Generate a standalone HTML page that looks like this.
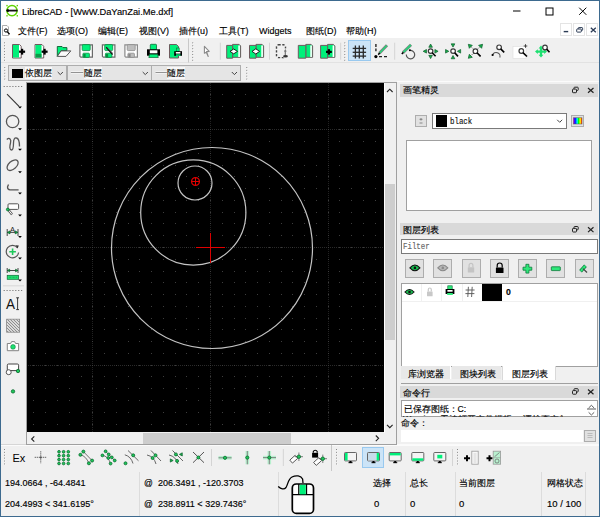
<!DOCTYPE html><html><head><meta charset="utf-8"><style>
*{margin:0;padding:0;box-sizing:border-box}
html,body{width:600px;height:517px;overflow:hidden;background:#f0f0f0}
body{position:relative;font-family:"Liberation Sans",sans-serif;font-size:8.7px;color:#000}
.t{position:absolute;white-space:nowrap;line-height:12px;-webkit-text-stroke:0.15px currentColor}
svg{position:absolute;left:0;top:0}
</style></head><body><div style="position:absolute;left:0px;top:0px;width:600px;height:38px;background:#fff"></div><div style="position:absolute;left:1px;top:38px;width:598px;height:24px;background:#f0f0f0"></div><div style="position:absolute;left:1px;top:62px;width:598px;height:1px;background:#e2e2e2"></div><div style="position:absolute;left:243px;top:64px;width:356px;height:1px;background:#fff"></div><div style="position:absolute;left:243px;top:64px;width:1px;height:17px;background:#fff"></div><div style="position:absolute;left:1px;top:81px;width:396px;height:1px;background:#fafafa"></div><div style="position:absolute;left:1px;top:63px;width:598px;height:19px;background:#f0f0f0"></div><div style="position:absolute;left:26px;top:82px;width:358px;height:351px;background:#000;border-left:1px solid #a0a0a0;border-top:1px solid #a0a0a0"></div><div style="position:absolute;left:384px;top:82px;width:12px;height:1px;background:#a0a0a0"></div><div style="position:absolute;left:384px;top:83px;width:12px;height:350px;background:#f0f0f0;border-left:1px solid #fff"></div><div style="position:absolute;left:385px;top:184px;width:10px;height:156px;background:#cdcdcd"></div><div style="position:absolute;left:396px;top:82px;width:1px;height:364px;background:#a0a0a0"></div><div style="position:absolute;left:26px;top:432px;width:358px;height:13px;background:#f0f0f0;border-left:1px solid #a0a0a0"></div><div style="position:absolute;left:143px;top:433px;width:148px;height:11px;background:#cdcdcd"></div><div style="position:absolute;left:26px;top:444px;width:371px;height:1px;background:#a0a0a0"></div><div style="position:absolute;left:1px;top:444px;width:25px;height:1px;background:#d6d6d6"></div><div style="position:absolute;left:1px;top:445px;width:598px;height:1px;background:#fbfbfb"></div><div style="position:absolute;left:397px;top:444px;width:202px;height:1px;background:#fafafa"></div><div style="position:absolute;left:0px;top:0px;width:600px;height:1px;background:#3d6a8f"></div><div style="position:absolute;left:0px;top:0px;width:1px;height:517px;background:#3d6a8f"></div><div style="position:absolute;left:599px;top:0px;width:1px;height:517px;background:#3d6a8f"></div><div style="position:absolute;left:0px;top:516px;width:600px;height:1px;background:#3d6a8f"></div><div style="position:absolute;left:397px;top:81px;width:202px;height:1px;background:#fbfbfb"></div><div style="position:absolute;left:400px;top:84px;width:198px;height:12.5px;background:#d9d9d9"></div><div style="position:absolute;left:415px;top:115px;width:12px;height:12px;background:#e1e1e1;border:1px solid #adadad"></div><div style="position:absolute;left:432px;top:113px;width:135px;height:16px;background:#fff;border:1px solid #7a7a7a"></div><div style="position:absolute;left:436px;top:115px;width:11px;height:12px;background:#000"></div><div style="position:absolute;left:571px;top:115px;width:13px;height:12px;background:#e1e1e1;border:1px solid #adadad"></div><div style="position:absolute;left:406px;top:140px;width:186px;height:71px;background:#fff;border:1px solid #a0a0a0"></div><div style="position:absolute;left:400px;top:223px;width:198px;height:12px;background:#d9d9d9"></div><div style="position:absolute;left:401px;top:239px;width:197px;height:15px;background:#fff;border:1px solid #7a7a7a"></div><div style="position:absolute;left:405px;top:259px;width:19px;height:19px;background:#e1e1e1;border:1px solid #adadad"></div><div style="position:absolute;left:433px;top:259px;width:19px;height:19px;background:#e1e1e1;border:1px solid #adadad"></div><div style="position:absolute;left:462px;top:259px;width:19px;height:19px;background:#e1e1e1;border:1px solid #adadad"></div><div style="position:absolute;left:490px;top:259px;width:19px;height:19px;background:#e1e1e1;border:1px solid #adadad"></div><div style="position:absolute;left:518px;top:259px;width:19px;height:19px;background:#e1e1e1;border:1px solid #adadad"></div><div style="position:absolute;left:546px;top:259px;width:19px;height:19px;background:#e1e1e1;border:1px solid #adadad"></div><div style="position:absolute;left:575px;top:259px;width:19px;height:19px;background:#e1e1e1;border:1px solid #adadad"></div><div style="position:absolute;left:401px;top:283px;width:197px;height:84px;background:#fff;border:1px solid #a0a0a0"></div><div style="position:absolute;left:402px;top:301px;width:195px;height:1px;background:#f0f0f0"></div><div style="position:absolute;left:421px;top:284px;width:1px;height:17px;background:#f0f0f0"></div><div style="position:absolute;left:441px;top:284px;width:1px;height:17px;background:#f0f0f0"></div><div style="position:absolute;left:462px;top:284px;width:1px;height:17px;background:#f0f0f0"></div><div style="position:absolute;left:482px;top:284px;width:20px;height:17px;background:#000"></div><div style="position:absolute;left:401px;top:366px;width:50px;height:13px;background:#e8e8e8;border-right:1px solid #fff"></div><div style="position:absolute;left:452px;top:366px;width:49px;height:13px;background:#e8e8e8"></div><div style="position:absolute;left:502px;top:366px;width:54px;height:14px;background:#fff;border-left:1px solid #d9d9d9;border-right:1px solid #d9d9d9"></div><div style="position:absolute;left:401px;top:383px;width:197px;height:1px;background:#a0a0a0"></div><div style="position:absolute;left:400px;top:386px;width:198px;height:12px;background:#d9d9d9"></div><div style="position:absolute;left:401px;top:400px;width:197px;height:17px;background:#fff;border:1px solid #a0a0a0"></div><div style="position:absolute;left:401px;top:430px;width:182px;height:12px;background:#fff"></div><div style="position:absolute;left:584px;top:430px;width:12px;height:12px;background:#e1e1e1;border:1px solid #adadad"></div><div style="position:absolute;left:8px;top:65px;width:59px;height:16px;background:#e5e5e5;border:1px solid #adadad"></div><div style="position:absolute;left:12px;top:69px;width:11px;height:9px;background:#000"></div><div style="position:absolute;left:67px;top:65px;width:85px;height:16px;background:#e5e5e5;border:1px solid #adadad"></div><div style="position:absolute;left:151px;top:65px;width:90px;height:16px;background:#e5e5e5;border:1px solid #adadad"></div><div style="position:absolute;left:348px;top:40px;width:23px;height:21px;background:#cce4f7;border:1px solid #99c9ef"></div><div style="position:absolute;left:362px;top:447px;width:22px;height:21px;background:#cce4f7;border:1px solid #99c9ef"></div><div style="position:absolute;left:139px;top:472px;width:1px;height:44px;background:#dcdcdc"></div><div style="position:absolute;left:278px;top:472px;width:1px;height:44px;background:#dcdcdc"></div><div style="position:absolute;left:405px;top:472px;width:1px;height:44px;background:#dcdcdc"></div><div style="position:absolute;left:455px;top:472px;width:1px;height:44px;background:#dcdcdc"></div><div style="position:absolute;left:541px;top:472px;width:1px;height:44px;background:#dcdcdc"></div><div style="position:absolute;left:585px;top:472px;width:1px;height:44px;background:#dcdcdc"></div><div class="t" style="left:22px;top:5.5px;font-size:9.3px;color:#000">LibreCAD - [WwW.DaYanZai.Me.dxf]</div><div class="t" style="left:18px;top:25px;font-size:9px">文件(F)</div><div class="t" style="left:57px;top:25px;font-size:9px">选项(O)</div><div class="t" style="left:98px;top:25px;font-size:9px">编辑(E)</div><div class="t" style="left:139px;top:25px;font-size:9px">视图(V)</div><div class="t" style="left:179px;top:25px;font-size:9px">插件(u)</div><div class="t" style="left:219px;top:25px;font-size:9px">工具(T)</div><div class="t" style="left:259px;top:25px;font-size:9px">Widgets</div><div class="t" style="left:306px;top:25px;font-size:9px">图纸(D)</div><div class="t" style="left:346px;top:25px;font-size:9px">帮助(H)</div><div class="t" style="left:25px;top:67px;font-size:8.5px;background:#f8f8f8">依图层</div><div class="t" style="left:84px;top:67px;font-size:8.5px;background:#f8f8f8">随层</div><div class="t" style="left:167px;top:67px;font-size:8.5px;background:#f8f8f8">随层</div><div class="t" style="left:403px;top:84px;">画笔精灵</div><div class="t" style="left:450px;top:116px;font-family:'Liberation Mono',monospace;font-size:9.5px;transform:scaleX(0.78);transform-origin:0 0;color:#111">black</div><div class="t" style="left:403px;top:224px;">图层列表</div><div class="t" style="left:403px;top:241px;font-family:'Liberation Mono',monospace;font-size:9.5px;transform:scaleX(0.78);transform-origin:0 0;color:#666">Filter</div><div class="t" style="left:506px;top:286px;font-weight:bold">0</div><div class="t" style="left:408px;top:368px;">库浏览器</div><div class="t" style="left:460px;top:368px;">图块列表</div><div class="t" style="left:512px;top:368px;">图层列表</div><div class="t" style="left:403px;top:387px;">命令行</div><div class="t" style="left:404px;top:403px;">已保存图纸<span style='letter-spacing:-3px'>：</span> C:</div><div style="position:absolute;left:403px;top:415px;width:160px;height:2px;overflow:hidden"><div class="t" style="left:0;top:-2.5px;color:#222">Warning: 无法打开文件模板。 请检查文件路径设置</div></div><div class="t" style="left:401px;top:417px;">命令<span style='letter-spacing:-3px'>：</span></div><div class="t" style="left:12.5px;top:451.5px;font-size:11px;-webkit-text-stroke:0">Ex</div><div class="t" style="left:5px;top:477px;font-size:9px">194.0664 , -64.4841</div><div class="t" style="left:5px;top:498px;font-size:9px">204.4993 &lt; 341.6195°</div><div class="t" style="left:144px;top:477px;">@</div><div class="t" style="left:158px;top:477px;font-size:9px">206.3491 , -120.3703</div><div class="t" style="left:144px;top:498px;">@</div><div class="t" style="left:158px;top:498px;font-size:9px">238.8911 &lt; 329.7436°</div><div class="t" style="left:373px;top:477px;">选择</div><div class="t" style="left:374px;top:498px;font-size:9.5px">0</div><div class="t" style="left:410px;top:477px;">总长</div><div class="t" style="left:410px;top:498px;font-size:9.5px">0</div><div class="t" style="left:459px;top:477px;">当前图层</div><div class="t" style="left:459px;top:498px;font-size:9.5px">0</div><div class="t" style="left:547px;top:477px;">网格状态</div><div class="t" style="left:547px;top:498px;font-size:9.5px">10 / 100</div><svg width="600" height="517" viewBox="0 0 600 517"><defs><clipPath id="cv"><rect x="27" y="83" width="357" height="349"/></clipPath></defs><g clip-path="url(#cv)"><rect x="92" y="83" width="1" height="1" fill="#222"/><rect x="92" y="85" width="1" height="1" fill="#222"/><rect x="92" y="87" width="1" height="1" fill="#222"/><rect x="92" y="89" width="1" height="1" fill="#222"/><rect x="92" y="91" width="1" height="1" fill="#222"/><rect x="92" y="93" width="1" height="1" fill="#222"/><rect x="92" y="95" width="1" height="1" fill="#222"/><rect x="92" y="97" width="1" height="1" fill="#222"/><rect x="92" y="99" width="1" height="1" fill="#222"/><rect x="92" y="101" width="1" height="1" fill="#222"/><rect x="92" y="103" width="1" height="1" fill="#222"/><rect x="92" y="105" width="1" height="1" fill="#222"/><rect x="92" y="107" width="1" height="1" fill="#222"/><rect x="92" y="109" width="1" height="1" fill="#222"/><rect x="92" y="111" width="1" height="1" fill="#222"/><rect x="92" y="113" width="1" height="1" fill="#222"/><rect x="92" y="115" width="1" height="1" fill="#222"/><rect x="92" y="117" width="1" height="1" fill="#222"/><rect x="92" y="119" width="1" height="1" fill="#222"/><rect x="92" y="121" width="1" height="1" fill="#222"/><rect x="92" y="123" width="1" height="1" fill="#222"/><rect x="92" y="125" width="1" height="1" fill="#222"/><rect x="92" y="127" width="1" height="1" fill="#222"/><rect x="92" y="129" width="1" height="1" fill="#222"/><rect x="92" y="131" width="1" height="1" fill="#222"/><rect x="92" y="133" width="1" height="1" fill="#222"/><rect x="92" y="135" width="1" height="1" fill="#222"/><rect x="92" y="137" width="1" height="1" fill="#222"/><rect x="92" y="139" width="1" height="1" fill="#222"/><rect x="92" y="141" width="1" height="1" fill="#222"/><rect x="92" y="143" width="1" height="1" fill="#222"/><rect x="92" y="145" width="1" height="1" fill="#222"/><rect x="92" y="147" width="1" height="1" fill="#222"/><rect x="92" y="149" width="1" height="1" fill="#222"/><rect x="92" y="151" width="1" height="1" fill="#222"/><rect x="92" y="153" width="1" height="1" fill="#222"/><rect x="92" y="155" width="1" height="1" fill="#222"/><rect x="92" y="157" width="1" height="1" fill="#222"/><rect x="92" y="159" width="1" height="1" fill="#222"/><rect x="92" y="161" width="1" height="1" fill="#222"/><rect x="92" y="163" width="1" height="1" fill="#222"/><rect x="92" y="165" width="1" height="1" fill="#222"/><rect x="92" y="167" width="1" height="1" fill="#222"/><rect x="92" y="169" width="1" height="1" fill="#222"/><rect x="92" y="171" width="1" height="1" fill="#222"/><rect x="92" y="173" width="1" height="1" fill="#222"/><rect x="92" y="175" width="1" height="1" fill="#222"/><rect x="92" y="177" width="1" height="1" fill="#222"/><rect x="92" y="179" width="1" height="1" fill="#222"/><rect x="92" y="181" width="1" height="1" fill="#222"/><rect x="92" y="183" width="1" height="1" fill="#222"/><rect x="92" y="185" width="1" height="1" fill="#222"/><rect x="92" y="187" width="1" height="1" fill="#222"/><rect x="92" y="189" width="1" height="1" fill="#222"/><rect x="92" y="191" width="1" height="1" fill="#222"/><rect x="92" y="193" width="1" height="1" fill="#222"/><rect x="92" y="195" width="1" height="1" fill="#222"/><rect x="92" y="197" width="1" height="1" fill="#222"/><rect x="92" y="199" width="1" height="1" fill="#222"/><rect x="92" y="201" width="1" height="1" fill="#222"/><rect x="92" y="203" width="1" height="1" fill="#222"/><rect x="92" y="205" width="1" height="1" fill="#222"/><rect x="92" y="207" width="1" height="1" fill="#222"/><rect x="92" y="209" width="1" height="1" fill="#222"/><rect x="92" y="211" width="1" height="1" fill="#222"/><rect x="92" y="213" width="1" height="1" fill="#222"/><rect x="92" y="215" width="1" height="1" fill="#222"/><rect x="92" y="217" width="1" height="1" fill="#222"/><rect x="92" y="219" width="1" height="1" fill="#222"/><rect x="92" y="221" width="1" height="1" fill="#222"/><rect x="92" y="223" width="1" height="1" fill="#222"/><rect x="92" y="225" width="1" height="1" fill="#222"/><rect x="92" y="227" width="1" height="1" fill="#222"/><rect x="92" y="229" width="1" height="1" fill="#222"/><rect x="92" y="231" width="1" height="1" fill="#222"/><rect x="92" y="233" width="1" height="1" fill="#222"/><rect x="92" y="235" width="1" height="1" fill="#222"/><rect x="92" y="237" width="1" height="1" fill="#222"/><rect x="92" y="239" width="1" height="1" fill="#222"/><rect x="92" y="241" width="1" height="1" fill="#222"/><rect x="92" y="243" width="1" height="1" fill="#222"/><rect x="92" y="245" width="1" height="1" fill="#222"/><rect x="92" y="247" width="1" height="1" fill="#222"/><rect x="92" y="249" width="1" height="1" fill="#222"/><rect x="92" y="251" width="1" height="1" fill="#222"/><rect x="92" y="253" width="1" height="1" fill="#222"/><rect x="92" y="255" width="1" height="1" fill="#222"/><rect x="92" y="257" width="1" height="1" fill="#222"/><rect x="92" y="259" width="1" height="1" fill="#222"/><rect x="92" y="261" width="1" height="1" fill="#222"/><rect x="92" y="263" width="1" height="1" fill="#222"/><rect x="92" y="265" width="1" height="1" fill="#222"/><rect x="92" y="267" width="1" height="1" fill="#222"/><rect x="92" y="269" width="1" height="1" fill="#222"/><rect x="92" y="271" width="1" height="1" fill="#222"/><rect x="92" y="273" width="1" height="1" fill="#222"/><rect x="92" y="275" width="1" height="1" fill="#222"/><rect x="92" y="277" width="1" height="1" fill="#222"/><rect x="92" y="279" width="1" height="1" fill="#222"/><rect x="92" y="281" width="1" height="1" fill="#222"/><rect x="92" y="283" width="1" height="1" fill="#222"/><rect x="92" y="285" width="1" height="1" fill="#222"/><rect x="92" y="287" width="1" height="1" fill="#222"/><rect x="92" y="289" width="1" height="1" fill="#222"/><rect x="92" y="291" width="1" height="1" fill="#222"/><rect x="92" y="293" width="1" height="1" fill="#222"/><rect x="92" y="295" width="1" height="1" fill="#222"/><rect x="92" y="297" width="1" height="1" fill="#222"/><rect x="92" y="299" width="1" height="1" fill="#222"/><rect x="92" y="301" width="1" height="1" fill="#222"/><rect x="92" y="303" width="1" height="1" fill="#222"/><rect x="92" y="305" width="1" height="1" fill="#222"/><rect x="92" y="307" width="1" height="1" fill="#222"/><rect x="92" y="309" width="1" height="1" fill="#222"/><rect x="92" y="311" width="1" height="1" fill="#222"/><rect x="92" y="313" width="1" height="1" fill="#222"/><rect x="92" y="315" width="1" height="1" fill="#222"/><rect x="92" y="317" width="1" height="1" fill="#222"/><rect x="92" y="319" width="1" height="1" fill="#222"/><rect x="92" y="321" width="1" height="1" fill="#222"/><rect x="92" y="323" width="1" height="1" fill="#222"/><rect x="92" y="325" width="1" height="1" fill="#222"/><rect x="92" y="327" width="1" height="1" fill="#222"/><rect x="92" y="329" width="1" height="1" fill="#222"/><rect x="92" y="331" width="1" height="1" fill="#222"/><rect x="92" y="333" width="1" height="1" fill="#222"/><rect x="92" y="335" width="1" height="1" fill="#222"/><rect x="92" y="337" width="1" height="1" fill="#222"/><rect x="92" y="339" width="1" height="1" fill="#222"/><rect x="92" y="341" width="1" height="1" fill="#222"/><rect x="92" y="343" width="1" height="1" fill="#222"/><rect x="92" y="345" width="1" height="1" fill="#222"/><rect x="92" y="347" width="1" height="1" fill="#222"/><rect x="92" y="349" width="1" height="1" fill="#222"/><rect x="92" y="351" width="1" height="1" fill="#222"/><rect x="92" y="353" width="1" height="1" fill="#222"/><rect x="92" y="355" width="1" height="1" fill="#222"/><rect x="92" y="357" width="1" height="1" fill="#222"/><rect x="92" y="359" width="1" height="1" fill="#222"/><rect x="92" y="361" width="1" height="1" fill="#222"/><rect x="92" y="363" width="1" height="1" fill="#222"/><rect x="92" y="365" width="1" height="1" fill="#222"/><rect x="92" y="367" width="1" height="1" fill="#222"/><rect x="92" y="369" width="1" height="1" fill="#222"/><rect x="92" y="371" width="1" height="1" fill="#222"/><rect x="92" y="373" width="1" height="1" fill="#222"/><rect x="92" y="375" width="1" height="1" fill="#222"/><rect x="92" y="377" width="1" height="1" fill="#222"/><rect x="92" y="379" width="1" height="1" fill="#222"/><rect x="92" y="381" width="1" height="1" fill="#222"/><rect x="92" y="383" width="1" height="1" fill="#222"/><rect x="92" y="385" width="1" height="1" fill="#222"/><rect x="92" y="387" width="1" height="1" fill="#222"/><rect x="92" y="389" width="1" height="1" fill="#222"/><rect x="92" y="391" width="1" height="1" fill="#222"/><rect x="92" y="393" width="1" height="1" fill="#222"/><rect x="92" y="395" width="1" height="1" fill="#222"/><rect x="92" y="397" width="1" height="1" fill="#222"/><rect x="92" y="399" width="1" height="1" fill="#222"/><rect x="92" y="401" width="1" height="1" fill="#222"/><rect x="92" y="403" width="1" height="1" fill="#222"/><rect x="92" y="405" width="1" height="1" fill="#222"/><rect x="92" y="407" width="1" height="1" fill="#222"/><rect x="92" y="409" width="1" height="1" fill="#222"/><rect x="92" y="411" width="1" height="1" fill="#222"/><rect x="92" y="413" width="1" height="1" fill="#222"/><rect x="92" y="415" width="1" height="1" fill="#222"/><rect x="92" y="417" width="1" height="1" fill="#222"/><rect x="92" y="419" width="1" height="1" fill="#222"/><rect x="92" y="421" width="1" height="1" fill="#222"/><rect x="92" y="423" width="1" height="1" fill="#222"/><rect x="92" y="425" width="1" height="1" fill="#222"/><rect x="92" y="427" width="1" height="1" fill="#222"/><rect x="92" y="429" width="1" height="1" fill="#222"/><rect x="92" y="431" width="1" height="1" fill="#222"/><rect x="28" y="129" width="1" height="1" fill="#2a2a2a"/><rect x="30" y="129" width="1" height="1" fill="#2a2a2a"/><rect x="32" y="129" width="1" height="1" fill="#2a2a2a"/><rect x="34" y="129" width="1" height="1" fill="#2a2a2a"/><rect x="36" y="129" width="1" height="1" fill="#2a2a2a"/><rect x="38" y="129" width="1" height="1" fill="#2a2a2a"/><rect x="40" y="129" width="1" height="1" fill="#2a2a2a"/><rect x="42" y="129" width="1" height="1" fill="#2a2a2a"/><rect x="44" y="129" width="1" height="1" fill="#2a2a2a"/><rect x="46" y="129" width="1" height="1" fill="#2a2a2a"/><rect x="48" y="129" width="1" height="1" fill="#2a2a2a"/><rect x="50" y="129" width="1" height="1" fill="#2a2a2a"/><rect x="52" y="129" width="1" height="1" fill="#2a2a2a"/><rect x="54" y="129" width="1" height="1" fill="#2a2a2a"/><rect x="56" y="129" width="1" height="1" fill="#2a2a2a"/><rect x="58" y="129" width="1" height="1" fill="#2a2a2a"/><rect x="60" y="129" width="1" height="1" fill="#2a2a2a"/><rect x="62" y="129" width="1" height="1" fill="#2a2a2a"/><rect x="64" y="129" width="1" height="1" fill="#2a2a2a"/><rect x="66" y="129" width="1" height="1" fill="#2a2a2a"/><rect x="68" y="129" width="1" height="1" fill="#2a2a2a"/><rect x="70" y="129" width="1" height="1" fill="#2a2a2a"/><rect x="72" y="129" width="1" height="1" fill="#2a2a2a"/><rect x="74" y="129" width="1" height="1" fill="#2a2a2a"/><rect x="76" y="129" width="1" height="1" fill="#2a2a2a"/><rect x="78" y="129" width="1" height="1" fill="#2a2a2a"/><rect x="80" y="129" width="1" height="1" fill="#2a2a2a"/><rect x="82" y="129" width="1" height="1" fill="#2a2a2a"/><rect x="84" y="129" width="1" height="1" fill="#2a2a2a"/><rect x="86" y="129" width="1" height="1" fill="#2a2a2a"/><rect x="88" y="129" width="1" height="1" fill="#2a2a2a"/><rect x="90" y="129" width="1" height="1" fill="#2a2a2a"/><rect x="92" y="129" width="1" height="1" fill="#2a2a2a"/><rect x="94" y="129" width="1" height="1" fill="#2a2a2a"/><rect x="96" y="129" width="1" height="1" fill="#2a2a2a"/><rect x="98" y="129" width="1" height="1" fill="#2a2a2a"/><rect x="100" y="129" width="1" height="1" fill="#2a2a2a"/><rect x="102" y="129" width="1" height="1" fill="#2a2a2a"/><rect x="104" y="129" width="1" height="1" fill="#2a2a2a"/><rect x="106" y="129" width="1" height="1" fill="#2a2a2a"/><rect x="108" y="129" width="1" height="1" fill="#2a2a2a"/><rect x="110" y="129" width="1" height="1" fill="#2a2a2a"/><rect x="112" y="129" width="1" height="1" fill="#2a2a2a"/><rect x="114" y="129" width="1" height="1" fill="#2a2a2a"/><rect x="116" y="129" width="1" height="1" fill="#2a2a2a"/><rect x="118" y="129" width="1" height="1" fill="#2a2a2a"/><rect x="120" y="129" width="1" height="1" fill="#2a2a2a"/><rect x="122" y="129" width="1" height="1" fill="#2a2a2a"/><rect x="124" y="129" width="1" height="1" fill="#2a2a2a"/><rect x="126" y="129" width="1" height="1" fill="#2a2a2a"/><rect x="128" y="129" width="1" height="1" fill="#2a2a2a"/><rect x="130" y="129" width="1" height="1" fill="#2a2a2a"/><rect x="132" y="129" width="1" height="1" fill="#2a2a2a"/><rect x="134" y="129" width="1" height="1" fill="#2a2a2a"/><rect x="136" y="129" width="1" height="1" fill="#2a2a2a"/><rect x="138" y="129" width="1" height="1" fill="#2a2a2a"/><rect x="140" y="129" width="1" height="1" fill="#2a2a2a"/><rect x="142" y="129" width="1" height="1" fill="#2a2a2a"/><rect x="144" y="129" width="1" height="1" fill="#2a2a2a"/><rect x="146" y="129" width="1" height="1" fill="#2a2a2a"/><rect x="148" y="129" width="1" height="1" fill="#2a2a2a"/><rect x="150" y="129" width="1" height="1" fill="#2a2a2a"/><rect x="152" y="129" width="1" height="1" fill="#2a2a2a"/><rect x="154" y="129" width="1" height="1" fill="#2a2a2a"/><rect x="156" y="129" width="1" height="1" fill="#2a2a2a"/><rect x="158" y="129" width="1" height="1" fill="#2a2a2a"/><rect x="160" y="129" width="1" height="1" fill="#2a2a2a"/><rect x="162" y="129" width="1" height="1" fill="#2a2a2a"/><rect x="164" y="129" width="1" height="1" fill="#2a2a2a"/><rect x="166" y="129" width="1" height="1" fill="#2a2a2a"/><rect x="168" y="129" width="1" height="1" fill="#2a2a2a"/><rect x="170" y="129" width="1" height="1" fill="#2a2a2a"/><rect x="172" y="129" width="1" height="1" fill="#2a2a2a"/><rect x="174" y="129" width="1" height="1" fill="#2a2a2a"/><rect x="176" y="129" width="1" height="1" fill="#2a2a2a"/><rect x="178" y="129" width="1" height="1" fill="#2a2a2a"/><rect x="180" y="129" width="1" height="1" fill="#2a2a2a"/><rect x="182" y="129" width="1" height="1" fill="#2a2a2a"/><rect x="184" y="129" width="1" height="1" fill="#2a2a2a"/><rect x="186" y="129" width="1" height="1" fill="#2a2a2a"/><rect x="188" y="129" width="1" height="1" fill="#2a2a2a"/><rect x="190" y="129" width="1" height="1" fill="#2a2a2a"/><rect x="192" y="129" width="1" height="1" fill="#2a2a2a"/><rect x="194" y="129" width="1" height="1" fill="#2a2a2a"/><rect x="196" y="129" width="1" height="1" fill="#2a2a2a"/><rect x="198" y="129" width="1" height="1" fill="#2a2a2a"/><rect x="200" y="129" width="1" height="1" fill="#2a2a2a"/><rect x="202" y="129" width="1" height="1" fill="#2a2a2a"/><rect x="204" y="129" width="1" height="1" fill="#2a2a2a"/><rect x="206" y="129" width="1" height="1" fill="#2a2a2a"/><rect x="208" y="129" width="1" height="1" fill="#2a2a2a"/><rect x="210" y="129" width="1" height="1" fill="#2a2a2a"/><rect x="212" y="129" width="1" height="1" fill="#2a2a2a"/><rect x="214" y="129" width="1" height="1" fill="#2a2a2a"/><rect x="216" y="129" width="1" height="1" fill="#2a2a2a"/><rect x="218" y="129" width="1" height="1" fill="#2a2a2a"/><rect x="220" y="129" width="1" height="1" fill="#2a2a2a"/><rect x="222" y="129" width="1" height="1" fill="#2a2a2a"/><rect x="224" y="129" width="1" height="1" fill="#2a2a2a"/><rect x="226" y="129" width="1" height="1" fill="#2a2a2a"/><rect x="228" y="129" width="1" height="1" fill="#2a2a2a"/><rect x="230" y="129" width="1" height="1" fill="#2a2a2a"/><rect x="232" y="129" width="1" height="1" fill="#2a2a2a"/><rect x="234" y="129" width="1" height="1" fill="#2a2a2a"/><rect x="236" y="129" width="1" height="1" fill="#2a2a2a"/><rect x="238" y="129" width="1" height="1" fill="#2a2a2a"/><rect x="240" y="129" width="1" height="1" fill="#2a2a2a"/><rect x="242" y="129" width="1" height="1" fill="#2a2a2a"/><rect x="244" y="129" width="1" height="1" fill="#2a2a2a"/><rect x="246" y="129" width="1" height="1" fill="#2a2a2a"/><rect x="248" y="129" width="1" height="1" fill="#2a2a2a"/><rect x="250" y="129" width="1" height="1" fill="#2a2a2a"/><rect x="252" y="129" width="1" height="1" fill="#2a2a2a"/><rect x="254" y="129" width="1" height="1" fill="#2a2a2a"/><rect x="256" y="129" width="1" height="1" fill="#2a2a2a"/><rect x="258" y="129" width="1" height="1" fill="#2a2a2a"/><rect x="260" y="129" width="1" height="1" fill="#2a2a2a"/><rect x="262" y="129" width="1" height="1" fill="#2a2a2a"/><rect x="264" y="129" width="1" height="1" fill="#2a2a2a"/><rect x="266" y="129" width="1" height="1" fill="#2a2a2a"/><rect x="268" y="129" width="1" height="1" fill="#2a2a2a"/><rect x="270" y="129" width="1" height="1" fill="#2a2a2a"/><rect x="272" y="129" width="1" height="1" fill="#2a2a2a"/><rect x="274" y="129" width="1" height="1" fill="#2a2a2a"/><rect x="276" y="129" width="1" height="1" fill="#2a2a2a"/><rect x="278" y="129" width="1" height="1" fill="#2a2a2a"/><rect x="280" y="129" width="1" height="1" fill="#2a2a2a"/><rect x="282" y="129" width="1" height="1" fill="#2a2a2a"/><rect x="284" y="129" width="1" height="1" fill="#2a2a2a"/><rect x="286" y="129" width="1" height="1" fill="#2a2a2a"/><rect x="288" y="129" width="1" height="1" fill="#2a2a2a"/><rect x="290" y="129" width="1" height="1" fill="#2a2a2a"/><rect x="292" y="129" width="1" height="1" fill="#2a2a2a"/><rect x="294" y="129" width="1" height="1" fill="#2a2a2a"/><rect x="296" y="129" width="1" height="1" fill="#2a2a2a"/><rect x="298" y="129" width="1" height="1" fill="#2a2a2a"/><rect x="300" y="129" width="1" height="1" fill="#2a2a2a"/><rect x="302" y="129" width="1" height="1" fill="#2a2a2a"/><rect x="304" y="129" width="1" height="1" fill="#2a2a2a"/><rect x="306" y="129" width="1" height="1" fill="#2a2a2a"/><rect x="308" y="129" width="1" height="1" fill="#2a2a2a"/><rect x="310" y="129" width="1" height="1" fill="#2a2a2a"/><rect x="312" y="129" width="1" height="1" fill="#2a2a2a"/><rect x="314" y="129" width="1" height="1" fill="#2a2a2a"/><rect x="316" y="129" width="1" height="1" fill="#2a2a2a"/><rect x="318" y="129" width="1" height="1" fill="#2a2a2a"/><rect x="320" y="129" width="1" height="1" fill="#2a2a2a"/><rect x="322" y="129" width="1" height="1" fill="#2a2a2a"/><rect x="324" y="129" width="1" height="1" fill="#2a2a2a"/><rect x="326" y="129" width="1" height="1" fill="#2a2a2a"/><rect x="328" y="129" width="1" height="1" fill="#2a2a2a"/><rect x="330" y="129" width="1" height="1" fill="#2a2a2a"/><rect x="332" y="129" width="1" height="1" fill="#2a2a2a"/><rect x="334" y="129" width="1" height="1" fill="#2a2a2a"/><rect x="336" y="129" width="1" height="1" fill="#2a2a2a"/><rect x="338" y="129" width="1" height="1" fill="#2a2a2a"/><rect x="340" y="129" width="1" height="1" fill="#2a2a2a"/><rect x="342" y="129" width="1" height="1" fill="#2a2a2a"/><rect x="344" y="129" width="1" height="1" fill="#2a2a2a"/><rect x="346" y="129" width="1" height="1" fill="#2a2a2a"/><rect x="348" y="129" width="1" height="1" fill="#2a2a2a"/><rect x="350" y="129" width="1" height="1" fill="#2a2a2a"/><rect x="352" y="129" width="1" height="1" fill="#2a2a2a"/><rect x="354" y="129" width="1" height="1" fill="#2a2a2a"/><rect x="356" y="129" width="1" height="1" fill="#2a2a2a"/><rect x="358" y="129" width="1" height="1" fill="#2a2a2a"/><rect x="360" y="129" width="1" height="1" fill="#2a2a2a"/><rect x="362" y="129" width="1" height="1" fill="#2a2a2a"/><rect x="364" y="129" width="1" height="1" fill="#2a2a2a"/><rect x="366" y="129" width="1" height="1" fill="#2a2a2a"/><rect x="368" y="129" width="1" height="1" fill="#2a2a2a"/><rect x="370" y="129" width="1" height="1" fill="#2a2a2a"/><rect x="372" y="129" width="1" height="1" fill="#2a2a2a"/><rect x="374" y="129" width="1" height="1" fill="#2a2a2a"/><rect x="376" y="129" width="1" height="1" fill="#2a2a2a"/><rect x="378" y="129" width="1" height="1" fill="#2a2a2a"/><rect x="380" y="129" width="1" height="1" fill="#2a2a2a"/><rect x="382" y="129" width="1" height="1" fill="#2a2a2a"/><rect x="210" y="83" width="1" height="1" fill="#222"/><rect x="210" y="85" width="1" height="1" fill="#222"/><rect x="210" y="87" width="1" height="1" fill="#222"/><rect x="210" y="89" width="1" height="1" fill="#222"/><rect x="210" y="91" width="1" height="1" fill="#222"/><rect x="210" y="93" width="1" height="1" fill="#222"/><rect x="210" y="95" width="1" height="1" fill="#222"/><rect x="210" y="97" width="1" height="1" fill="#222"/><rect x="210" y="99" width="1" height="1" fill="#222"/><rect x="210" y="101" width="1" height="1" fill="#222"/><rect x="210" y="103" width="1" height="1" fill="#222"/><rect x="210" y="105" width="1" height="1" fill="#222"/><rect x="210" y="107" width="1" height="1" fill="#222"/><rect x="210" y="109" width="1" height="1" fill="#222"/><rect x="210" y="111" width="1" height="1" fill="#222"/><rect x="210" y="113" width="1" height="1" fill="#222"/><rect x="210" y="115" width="1" height="1" fill="#222"/><rect x="210" y="117" width="1" height="1" fill="#222"/><rect x="210" y="119" width="1" height="1" fill="#222"/><rect x="210" y="121" width="1" height="1" fill="#222"/><rect x="210" y="123" width="1" height="1" fill="#222"/><rect x="210" y="125" width="1" height="1" fill="#222"/><rect x="210" y="127" width="1" height="1" fill="#222"/><rect x="210" y="129" width="1" height="1" fill="#222"/><rect x="210" y="131" width="1" height="1" fill="#222"/><rect x="210" y="133" width="1" height="1" fill="#222"/><rect x="210" y="135" width="1" height="1" fill="#222"/><rect x="210" y="137" width="1" height="1" fill="#222"/><rect x="210" y="139" width="1" height="1" fill="#222"/><rect x="210" y="141" width="1" height="1" fill="#222"/><rect x="210" y="143" width="1" height="1" fill="#222"/><rect x="210" y="145" width="1" height="1" fill="#222"/><rect x="210" y="147" width="1" height="1" fill="#222"/><rect x="210" y="149" width="1" height="1" fill="#222"/><rect x="210" y="151" width="1" height="1" fill="#222"/><rect x="210" y="153" width="1" height="1" fill="#222"/><rect x="210" y="155" width="1" height="1" fill="#222"/><rect x="210" y="157" width="1" height="1" fill="#222"/><rect x="210" y="159" width="1" height="1" fill="#222"/><rect x="210" y="161" width="1" height="1" fill="#222"/><rect x="210" y="163" width="1" height="1" fill="#222"/><rect x="210" y="165" width="1" height="1" fill="#222"/><rect x="210" y="167" width="1" height="1" fill="#222"/><rect x="210" y="169" width="1" height="1" fill="#222"/><rect x="210" y="171" width="1" height="1" fill="#222"/><rect x="210" y="173" width="1" height="1" fill="#222"/><rect x="210" y="175" width="1" height="1" fill="#222"/><rect x="210" y="177" width="1" height="1" fill="#222"/><rect x="210" y="179" width="1" height="1" fill="#222"/><rect x="210" y="181" width="1" height="1" fill="#222"/><rect x="210" y="183" width="1" height="1" fill="#222"/><rect x="210" y="185" width="1" height="1" fill="#222"/><rect x="210" y="187" width="1" height="1" fill="#222"/><rect x="210" y="189" width="1" height="1" fill="#222"/><rect x="210" y="191" width="1" height="1" fill="#222"/><rect x="210" y="193" width="1" height="1" fill="#222"/><rect x="210" y="195" width="1" height="1" fill="#222"/><rect x="210" y="197" width="1" height="1" fill="#222"/><rect x="210" y="199" width="1" height="1" fill="#222"/><rect x="210" y="201" width="1" height="1" fill="#222"/><rect x="210" y="203" width="1" height="1" fill="#222"/><rect x="210" y="205" width="1" height="1" fill="#222"/><rect x="210" y="207" width="1" height="1" fill="#222"/><rect x="210" y="209" width="1" height="1" fill="#222"/><rect x="210" y="211" width="1" height="1" fill="#222"/><rect x="210" y="213" width="1" height="1" fill="#222"/><rect x="210" y="215" width="1" height="1" fill="#222"/><rect x="210" y="217" width="1" height="1" fill="#222"/><rect x="210" y="219" width="1" height="1" fill="#222"/><rect x="210" y="221" width="1" height="1" fill="#222"/><rect x="210" y="223" width="1" height="1" fill="#222"/><rect x="210" y="225" width="1" height="1" fill="#222"/><rect x="210" y="227" width="1" height="1" fill="#222"/><rect x="210" y="229" width="1" height="1" fill="#222"/><rect x="210" y="231" width="1" height="1" fill="#222"/><rect x="210" y="233" width="1" height="1" fill="#222"/><rect x="210" y="235" width="1" height="1" fill="#222"/><rect x="210" y="237" width="1" height="1" fill="#222"/><rect x="210" y="239" width="1" height="1" fill="#222"/><rect x="210" y="241" width="1" height="1" fill="#222"/><rect x="210" y="243" width="1" height="1" fill="#222"/><rect x="210" y="245" width="1" height="1" fill="#222"/><rect x="210" y="247" width="1" height="1" fill="#222"/><rect x="210" y="249" width="1" height="1" fill="#222"/><rect x="210" y="251" width="1" height="1" fill="#222"/><rect x="210" y="253" width="1" height="1" fill="#222"/><rect x="210" y="255" width="1" height="1" fill="#222"/><rect x="210" y="257" width="1" height="1" fill="#222"/><rect x="210" y="259" width="1" height="1" fill="#222"/><rect x="210" y="261" width="1" height="1" fill="#222"/><rect x="210" y="263" width="1" height="1" fill="#222"/><rect x="210" y="265" width="1" height="1" fill="#222"/><rect x="210" y="267" width="1" height="1" fill="#222"/><rect x="210" y="269" width="1" height="1" fill="#222"/><rect x="210" y="271" width="1" height="1" fill="#222"/><rect x="210" y="273" width="1" height="1" fill="#222"/><rect x="210" y="275" width="1" height="1" fill="#222"/><rect x="210" y="277" width="1" height="1" fill="#222"/><rect x="210" y="279" width="1" height="1" fill="#222"/><rect x="210" y="281" width="1" height="1" fill="#222"/><rect x="210" y="283" width="1" height="1" fill="#222"/><rect x="210" y="285" width="1" height="1" fill="#222"/><rect x="210" y="287" width="1" height="1" fill="#222"/><rect x="210" y="289" width="1" height="1" fill="#222"/><rect x="210" y="291" width="1" height="1" fill="#222"/><rect x="210" y="293" width="1" height="1" fill="#222"/><rect x="210" y="295" width="1" height="1" fill="#222"/><rect x="210" y="297" width="1" height="1" fill="#222"/><rect x="210" y="299" width="1" height="1" fill="#222"/><rect x="210" y="301" width="1" height="1" fill="#222"/><rect x="210" y="303" width="1" height="1" fill="#222"/><rect x="210" y="305" width="1" height="1" fill="#222"/><rect x="210" y="307" width="1" height="1" fill="#222"/><rect x="210" y="309" width="1" height="1" fill="#222"/><rect x="210" y="311" width="1" height="1" fill="#222"/><rect x="210" y="313" width="1" height="1" fill="#222"/><rect x="210" y="315" width="1" height="1" fill="#222"/><rect x="210" y="317" width="1" height="1" fill="#222"/><rect x="210" y="319" width="1" height="1" fill="#222"/><rect x="210" y="321" width="1" height="1" fill="#222"/><rect x="210" y="323" width="1" height="1" fill="#222"/><rect x="210" y="325" width="1" height="1" fill="#222"/><rect x="210" y="327" width="1" height="1" fill="#222"/><rect x="210" y="329" width="1" height="1" fill="#222"/><rect x="210" y="331" width="1" height="1" fill="#222"/><rect x="210" y="333" width="1" height="1" fill="#222"/><rect x="210" y="335" width="1" height="1" fill="#222"/><rect x="210" y="337" width="1" height="1" fill="#222"/><rect x="210" y="339" width="1" height="1" fill="#222"/><rect x="210" y="341" width="1" height="1" fill="#222"/><rect x="210" y="343" width="1" height="1" fill="#222"/><rect x="210" y="345" width="1" height="1" fill="#222"/><rect x="210" y="347" width="1" height="1" fill="#222"/><rect x="210" y="349" width="1" height="1" fill="#222"/><rect x="210" y="351" width="1" height="1" fill="#222"/><rect x="210" y="353" width="1" height="1" fill="#222"/><rect x="210" y="355" width="1" height="1" fill="#222"/><rect x="210" y="357" width="1" height="1" fill="#222"/><rect x="210" y="359" width="1" height="1" fill="#222"/><rect x="210" y="361" width="1" height="1" fill="#222"/><rect x="210" y="363" width="1" height="1" fill="#222"/><rect x="210" y="365" width="1" height="1" fill="#222"/><rect x="210" y="367" width="1" height="1" fill="#222"/><rect x="210" y="369" width="1" height="1" fill="#222"/><rect x="210" y="371" width="1" height="1" fill="#222"/><rect x="210" y="373" width="1" height="1" fill="#222"/><rect x="210" y="375" width="1" height="1" fill="#222"/><rect x="210" y="377" width="1" height="1" fill="#222"/><rect x="210" y="379" width="1" height="1" fill="#222"/><rect x="210" y="381" width="1" height="1" fill="#222"/><rect x="210" y="383" width="1" height="1" fill="#222"/><rect x="210" y="385" width="1" height="1" fill="#222"/><rect x="210" y="387" width="1" height="1" fill="#222"/><rect x="210" y="389" width="1" height="1" fill="#222"/><rect x="210" y="391" width="1" height="1" fill="#222"/><rect x="210" y="393" width="1" height="1" fill="#222"/><rect x="210" y="395" width="1" height="1" fill="#222"/><rect x="210" y="397" width="1" height="1" fill="#222"/><rect x="210" y="399" width="1" height="1" fill="#222"/><rect x="210" y="401" width="1" height="1" fill="#222"/><rect x="210" y="403" width="1" height="1" fill="#222"/><rect x="210" y="405" width="1" height="1" fill="#222"/><rect x="210" y="407" width="1" height="1" fill="#222"/><rect x="210" y="409" width="1" height="1" fill="#222"/><rect x="210" y="411" width="1" height="1" fill="#222"/><rect x="210" y="413" width="1" height="1" fill="#222"/><rect x="210" y="415" width="1" height="1" fill="#222"/><rect x="210" y="417" width="1" height="1" fill="#222"/><rect x="210" y="419" width="1" height="1" fill="#222"/><rect x="210" y="421" width="1" height="1" fill="#222"/><rect x="210" y="423" width="1" height="1" fill="#222"/><rect x="210" y="425" width="1" height="1" fill="#222"/><rect x="210" y="427" width="1" height="1" fill="#222"/><rect x="210" y="429" width="1" height="1" fill="#222"/><rect x="210" y="431" width="1" height="1" fill="#222"/><rect x="28" y="247" width="1" height="1" fill="#2a2a2a"/><rect x="30" y="247" width="1" height="1" fill="#2a2a2a"/><rect x="32" y="247" width="1" height="1" fill="#2a2a2a"/><rect x="34" y="247" width="1" height="1" fill="#2a2a2a"/><rect x="36" y="247" width="1" height="1" fill="#2a2a2a"/><rect x="38" y="247" width="1" height="1" fill="#2a2a2a"/><rect x="40" y="247" width="1" height="1" fill="#2a2a2a"/><rect x="42" y="247" width="1" height="1" fill="#2a2a2a"/><rect x="44" y="247" width="1" height="1" fill="#2a2a2a"/><rect x="46" y="247" width="1" height="1" fill="#2a2a2a"/><rect x="48" y="247" width="1" height="1" fill="#2a2a2a"/><rect x="50" y="247" width="1" height="1" fill="#2a2a2a"/><rect x="52" y="247" width="1" height="1" fill="#2a2a2a"/><rect x="54" y="247" width="1" height="1" fill="#2a2a2a"/><rect x="56" y="247" width="1" height="1" fill="#2a2a2a"/><rect x="58" y="247" width="1" height="1" fill="#2a2a2a"/><rect x="60" y="247" width="1" height="1" fill="#2a2a2a"/><rect x="62" y="247" width="1" height="1" fill="#2a2a2a"/><rect x="64" y="247" width="1" height="1" fill="#2a2a2a"/><rect x="66" y="247" width="1" height="1" fill="#2a2a2a"/><rect x="68" y="247" width="1" height="1" fill="#2a2a2a"/><rect x="70" y="247" width="1" height="1" fill="#2a2a2a"/><rect x="72" y="247" width="1" height="1" fill="#2a2a2a"/><rect x="74" y="247" width="1" height="1" fill="#2a2a2a"/><rect x="76" y="247" width="1" height="1" fill="#2a2a2a"/><rect x="78" y="247" width="1" height="1" fill="#2a2a2a"/><rect x="80" y="247" width="1" height="1" fill="#2a2a2a"/><rect x="82" y="247" width="1" height="1" fill="#2a2a2a"/><rect x="84" y="247" width="1" height="1" fill="#2a2a2a"/><rect x="86" y="247" width="1" height="1" fill="#2a2a2a"/><rect x="88" y="247" width="1" height="1" fill="#2a2a2a"/><rect x="90" y="247" width="1" height="1" fill="#2a2a2a"/><rect x="92" y="247" width="1" height="1" fill="#2a2a2a"/><rect x="94" y="247" width="1" height="1" fill="#2a2a2a"/><rect x="96" y="247" width="1" height="1" fill="#2a2a2a"/><rect x="98" y="247" width="1" height="1" fill="#2a2a2a"/><rect x="100" y="247" width="1" height="1" fill="#2a2a2a"/><rect x="102" y="247" width="1" height="1" fill="#2a2a2a"/><rect x="104" y="247" width="1" height="1" fill="#2a2a2a"/><rect x="106" y="247" width="1" height="1" fill="#2a2a2a"/><rect x="108" y="247" width="1" height="1" fill="#2a2a2a"/><rect x="110" y="247" width="1" height="1" fill="#2a2a2a"/><rect x="112" y="247" width="1" height="1" fill="#2a2a2a"/><rect x="114" y="247" width="1" height="1" fill="#2a2a2a"/><rect x="116" y="247" width="1" height="1" fill="#2a2a2a"/><rect x="118" y="247" width="1" height="1" fill="#2a2a2a"/><rect x="120" y="247" width="1" height="1" fill="#2a2a2a"/><rect x="122" y="247" width="1" height="1" fill="#2a2a2a"/><rect x="124" y="247" width="1" height="1" fill="#2a2a2a"/><rect x="126" y="247" width="1" height="1" fill="#2a2a2a"/><rect x="128" y="247" width="1" height="1" fill="#2a2a2a"/><rect x="130" y="247" width="1" height="1" fill="#2a2a2a"/><rect x="132" y="247" width="1" height="1" fill="#2a2a2a"/><rect x="134" y="247" width="1" height="1" fill="#2a2a2a"/><rect x="136" y="247" width="1" height="1" fill="#2a2a2a"/><rect x="138" y="247" width="1" height="1" fill="#2a2a2a"/><rect x="140" y="247" width="1" height="1" fill="#2a2a2a"/><rect x="142" y="247" width="1" height="1" fill="#2a2a2a"/><rect x="144" y="247" width="1" height="1" fill="#2a2a2a"/><rect x="146" y="247" width="1" height="1" fill="#2a2a2a"/><rect x="148" y="247" width="1" height="1" fill="#2a2a2a"/><rect x="150" y="247" width="1" height="1" fill="#2a2a2a"/><rect x="152" y="247" width="1" height="1" fill="#2a2a2a"/><rect x="154" y="247" width="1" height="1" fill="#2a2a2a"/><rect x="156" y="247" width="1" height="1" fill="#2a2a2a"/><rect x="158" y="247" width="1" height="1" fill="#2a2a2a"/><rect x="160" y="247" width="1" height="1" fill="#2a2a2a"/><rect x="162" y="247" width="1" height="1" fill="#2a2a2a"/><rect x="164" y="247" width="1" height="1" fill="#2a2a2a"/><rect x="166" y="247" width="1" height="1" fill="#2a2a2a"/><rect x="168" y="247" width="1" height="1" fill="#2a2a2a"/><rect x="170" y="247" width="1" height="1" fill="#2a2a2a"/><rect x="172" y="247" width="1" height="1" fill="#2a2a2a"/><rect x="174" y="247" width="1" height="1" fill="#2a2a2a"/><rect x="176" y="247" width="1" height="1" fill="#2a2a2a"/><rect x="178" y="247" width="1" height="1" fill="#2a2a2a"/><rect x="180" y="247" width="1" height="1" fill="#2a2a2a"/><rect x="182" y="247" width="1" height="1" fill="#2a2a2a"/><rect x="184" y="247" width="1" height="1" fill="#2a2a2a"/><rect x="186" y="247" width="1" height="1" fill="#2a2a2a"/><rect x="188" y="247" width="1" height="1" fill="#2a2a2a"/><rect x="190" y="247" width="1" height="1" fill="#2a2a2a"/><rect x="192" y="247" width="1" height="1" fill="#2a2a2a"/><rect x="194" y="247" width="1" height="1" fill="#2a2a2a"/><rect x="196" y="247" width="1" height="1" fill="#2a2a2a"/><rect x="198" y="247" width="1" height="1" fill="#2a2a2a"/><rect x="200" y="247" width="1" height="1" fill="#2a2a2a"/><rect x="202" y="247" width="1" height="1" fill="#2a2a2a"/><rect x="204" y="247" width="1" height="1" fill="#2a2a2a"/><rect x="206" y="247" width="1" height="1" fill="#2a2a2a"/><rect x="208" y="247" width="1" height="1" fill="#2a2a2a"/><rect x="210" y="247" width="1" height="1" fill="#2a2a2a"/><rect x="212" y="247" width="1" height="1" fill="#2a2a2a"/><rect x="214" y="247" width="1" height="1" fill="#2a2a2a"/><rect x="216" y="247" width="1" height="1" fill="#2a2a2a"/><rect x="218" y="247" width="1" height="1" fill="#2a2a2a"/><rect x="220" y="247" width="1" height="1" fill="#2a2a2a"/><rect x="222" y="247" width="1" height="1" fill="#2a2a2a"/><rect x="224" y="247" width="1" height="1" fill="#2a2a2a"/><rect x="226" y="247" width="1" height="1" fill="#2a2a2a"/><rect x="228" y="247" width="1" height="1" fill="#2a2a2a"/><rect x="230" y="247" width="1" height="1" fill="#2a2a2a"/><rect x="232" y="247" width="1" height="1" fill="#2a2a2a"/><rect x="234" y="247" width="1" height="1" fill="#2a2a2a"/><rect x="236" y="247" width="1" height="1" fill="#2a2a2a"/><rect x="238" y="247" width="1" height="1" fill="#2a2a2a"/><rect x="240" y="247" width="1" height="1" fill="#2a2a2a"/><rect x="242" y="247" width="1" height="1" fill="#2a2a2a"/><rect x="244" y="247" width="1" height="1" fill="#2a2a2a"/><rect x="246" y="247" width="1" height="1" fill="#2a2a2a"/><rect x="248" y="247" width="1" height="1" fill="#2a2a2a"/><rect x="250" y="247" width="1" height="1" fill="#2a2a2a"/><rect x="252" y="247" width="1" height="1" fill="#2a2a2a"/><rect x="254" y="247" width="1" height="1" fill="#2a2a2a"/><rect x="256" y="247" width="1" height="1" fill="#2a2a2a"/><rect x="258" y="247" width="1" height="1" fill="#2a2a2a"/><rect x="260" y="247" width="1" height="1" fill="#2a2a2a"/><rect x="262" y="247" width="1" height="1" fill="#2a2a2a"/><rect x="264" y="247" width="1" height="1" fill="#2a2a2a"/><rect x="266" y="247" width="1" height="1" fill="#2a2a2a"/><rect x="268" y="247" width="1" height="1" fill="#2a2a2a"/><rect x="270" y="247" width="1" height="1" fill="#2a2a2a"/><rect x="272" y="247" width="1" height="1" fill="#2a2a2a"/><rect x="274" y="247" width="1" height="1" fill="#2a2a2a"/><rect x="276" y="247" width="1" height="1" fill="#2a2a2a"/><rect x="278" y="247" width="1" height="1" fill="#2a2a2a"/><rect x="280" y="247" width="1" height="1" fill="#2a2a2a"/><rect x="282" y="247" width="1" height="1" fill="#2a2a2a"/><rect x="284" y="247" width="1" height="1" fill="#2a2a2a"/><rect x="286" y="247" width="1" height="1" fill="#2a2a2a"/><rect x="288" y="247" width="1" height="1" fill="#2a2a2a"/><rect x="290" y="247" width="1" height="1" fill="#2a2a2a"/><rect x="292" y="247" width="1" height="1" fill="#2a2a2a"/><rect x="294" y="247" width="1" height="1" fill="#2a2a2a"/><rect x="296" y="247" width="1" height="1" fill="#2a2a2a"/><rect x="298" y="247" width="1" height="1" fill="#2a2a2a"/><rect x="300" y="247" width="1" height="1" fill="#2a2a2a"/><rect x="302" y="247" width="1" height="1" fill="#2a2a2a"/><rect x="304" y="247" width="1" height="1" fill="#2a2a2a"/><rect x="306" y="247" width="1" height="1" fill="#2a2a2a"/><rect x="308" y="247" width="1" height="1" fill="#2a2a2a"/><rect x="310" y="247" width="1" height="1" fill="#2a2a2a"/><rect x="312" y="247" width="1" height="1" fill="#2a2a2a"/><rect x="314" y="247" width="1" height="1" fill="#2a2a2a"/><rect x="316" y="247" width="1" height="1" fill="#2a2a2a"/><rect x="318" y="247" width="1" height="1" fill="#2a2a2a"/><rect x="320" y="247" width="1" height="1" fill="#2a2a2a"/><rect x="322" y="247" width="1" height="1" fill="#2a2a2a"/><rect x="324" y="247" width="1" height="1" fill="#2a2a2a"/><rect x="326" y="247" width="1" height="1" fill="#2a2a2a"/><rect x="328" y="247" width="1" height="1" fill="#2a2a2a"/><rect x="330" y="247" width="1" height="1" fill="#2a2a2a"/><rect x="332" y="247" width="1" height="1" fill="#2a2a2a"/><rect x="334" y="247" width="1" height="1" fill="#2a2a2a"/><rect x="336" y="247" width="1" height="1" fill="#2a2a2a"/><rect x="338" y="247" width="1" height="1" fill="#2a2a2a"/><rect x="340" y="247" width="1" height="1" fill="#2a2a2a"/><rect x="342" y="247" width="1" height="1" fill="#2a2a2a"/><rect x="344" y="247" width="1" height="1" fill="#2a2a2a"/><rect x="346" y="247" width="1" height="1" fill="#2a2a2a"/><rect x="348" y="247" width="1" height="1" fill="#2a2a2a"/><rect x="350" y="247" width="1" height="1" fill="#2a2a2a"/><rect x="352" y="247" width="1" height="1" fill="#2a2a2a"/><rect x="354" y="247" width="1" height="1" fill="#2a2a2a"/><rect x="356" y="247" width="1" height="1" fill="#2a2a2a"/><rect x="358" y="247" width="1" height="1" fill="#2a2a2a"/><rect x="360" y="247" width="1" height="1" fill="#2a2a2a"/><rect x="362" y="247" width="1" height="1" fill="#2a2a2a"/><rect x="364" y="247" width="1" height="1" fill="#2a2a2a"/><rect x="366" y="247" width="1" height="1" fill="#2a2a2a"/><rect x="368" y="247" width="1" height="1" fill="#2a2a2a"/><rect x="370" y="247" width="1" height="1" fill="#2a2a2a"/><rect x="372" y="247" width="1" height="1" fill="#2a2a2a"/><rect x="374" y="247" width="1" height="1" fill="#2a2a2a"/><rect x="376" y="247" width="1" height="1" fill="#2a2a2a"/><rect x="378" y="247" width="1" height="1" fill="#2a2a2a"/><rect x="380" y="247" width="1" height="1" fill="#2a2a2a"/><rect x="382" y="247" width="1" height="1" fill="#2a2a2a"/><rect x="328" y="83" width="1" height="1" fill="#222"/><rect x="328" y="85" width="1" height="1" fill="#222"/><rect x="328" y="87" width="1" height="1" fill="#222"/><rect x="328" y="89" width="1" height="1" fill="#222"/><rect x="328" y="91" width="1" height="1" fill="#222"/><rect x="328" y="93" width="1" height="1" fill="#222"/><rect x="328" y="95" width="1" height="1" fill="#222"/><rect x="328" y="97" width="1" height="1" fill="#222"/><rect x="328" y="99" width="1" height="1" fill="#222"/><rect x="328" y="101" width="1" height="1" fill="#222"/><rect x="328" y="103" width="1" height="1" fill="#222"/><rect x="328" y="105" width="1" height="1" fill="#222"/><rect x="328" y="107" width="1" height="1" fill="#222"/><rect x="328" y="109" width="1" height="1" fill="#222"/><rect x="328" y="111" width="1" height="1" fill="#222"/><rect x="328" y="113" width="1" height="1" fill="#222"/><rect x="328" y="115" width="1" height="1" fill="#222"/><rect x="328" y="117" width="1" height="1" fill="#222"/><rect x="328" y="119" width="1" height="1" fill="#222"/><rect x="328" y="121" width="1" height="1" fill="#222"/><rect x="328" y="123" width="1" height="1" fill="#222"/><rect x="328" y="125" width="1" height="1" fill="#222"/><rect x="328" y="127" width="1" height="1" fill="#222"/><rect x="328" y="129" width="1" height="1" fill="#222"/><rect x="328" y="131" width="1" height="1" fill="#222"/><rect x="328" y="133" width="1" height="1" fill="#222"/><rect x="328" y="135" width="1" height="1" fill="#222"/><rect x="328" y="137" width="1" height="1" fill="#222"/><rect x="328" y="139" width="1" height="1" fill="#222"/><rect x="328" y="141" width="1" height="1" fill="#222"/><rect x="328" y="143" width="1" height="1" fill="#222"/><rect x="328" y="145" width="1" height="1" fill="#222"/><rect x="328" y="147" width="1" height="1" fill="#222"/><rect x="328" y="149" width="1" height="1" fill="#222"/><rect x="328" y="151" width="1" height="1" fill="#222"/><rect x="328" y="153" width="1" height="1" fill="#222"/><rect x="328" y="155" width="1" height="1" fill="#222"/><rect x="328" y="157" width="1" height="1" fill="#222"/><rect x="328" y="159" width="1" height="1" fill="#222"/><rect x="328" y="161" width="1" height="1" fill="#222"/><rect x="328" y="163" width="1" height="1" fill="#222"/><rect x="328" y="165" width="1" height="1" fill="#222"/><rect x="328" y="167" width="1" height="1" fill="#222"/><rect x="328" y="169" width="1" height="1" fill="#222"/><rect x="328" y="171" width="1" height="1" fill="#222"/><rect x="328" y="173" width="1" height="1" fill="#222"/><rect x="328" y="175" width="1" height="1" fill="#222"/><rect x="328" y="177" width="1" height="1" fill="#222"/><rect x="328" y="179" width="1" height="1" fill="#222"/><rect x="328" y="181" width="1" height="1" fill="#222"/><rect x="328" y="183" width="1" height="1" fill="#222"/><rect x="328" y="185" width="1" height="1" fill="#222"/><rect x="328" y="187" width="1" height="1" fill="#222"/><rect x="328" y="189" width="1" height="1" fill="#222"/><rect x="328" y="191" width="1" height="1" fill="#222"/><rect x="328" y="193" width="1" height="1" fill="#222"/><rect x="328" y="195" width="1" height="1" fill="#222"/><rect x="328" y="197" width="1" height="1" fill="#222"/><rect x="328" y="199" width="1" height="1" fill="#222"/><rect x="328" y="201" width="1" height="1" fill="#222"/><rect x="328" y="203" width="1" height="1" fill="#222"/><rect x="328" y="205" width="1" height="1" fill="#222"/><rect x="328" y="207" width="1" height="1" fill="#222"/><rect x="328" y="209" width="1" height="1" fill="#222"/><rect x="328" y="211" width="1" height="1" fill="#222"/><rect x="328" y="213" width="1" height="1" fill="#222"/><rect x="328" y="215" width="1" height="1" fill="#222"/><rect x="328" y="217" width="1" height="1" fill="#222"/><rect x="328" y="219" width="1" height="1" fill="#222"/><rect x="328" y="221" width="1" height="1" fill="#222"/><rect x="328" y="223" width="1" height="1" fill="#222"/><rect x="328" y="225" width="1" height="1" fill="#222"/><rect x="328" y="227" width="1" height="1" fill="#222"/><rect x="328" y="229" width="1" height="1" fill="#222"/><rect x="328" y="231" width="1" height="1" fill="#222"/><rect x="328" y="233" width="1" height="1" fill="#222"/><rect x="328" y="235" width="1" height="1" fill="#222"/><rect x="328" y="237" width="1" height="1" fill="#222"/><rect x="328" y="239" width="1" height="1" fill="#222"/><rect x="328" y="241" width="1" height="1" fill="#222"/><rect x="328" y="243" width="1" height="1" fill="#222"/><rect x="328" y="245" width="1" height="1" fill="#222"/><rect x="328" y="247" width="1" height="1" fill="#222"/><rect x="328" y="249" width="1" height="1" fill="#222"/><rect x="328" y="251" width="1" height="1" fill="#222"/><rect x="328" y="253" width="1" height="1" fill="#222"/><rect x="328" y="255" width="1" height="1" fill="#222"/><rect x="328" y="257" width="1" height="1" fill="#222"/><rect x="328" y="259" width="1" height="1" fill="#222"/><rect x="328" y="261" width="1" height="1" fill="#222"/><rect x="328" y="263" width="1" height="1" fill="#222"/><rect x="328" y="265" width="1" height="1" fill="#222"/><rect x="328" y="267" width="1" height="1" fill="#222"/><rect x="328" y="269" width="1" height="1" fill="#222"/><rect x="328" y="271" width="1" height="1" fill="#222"/><rect x="328" y="273" width="1" height="1" fill="#222"/><rect x="328" y="275" width="1" height="1" fill="#222"/><rect x="328" y="277" width="1" height="1" fill="#222"/><rect x="328" y="279" width="1" height="1" fill="#222"/><rect x="328" y="281" width="1" height="1" fill="#222"/><rect x="328" y="283" width="1" height="1" fill="#222"/><rect x="328" y="285" width="1" height="1" fill="#222"/><rect x="328" y="287" width="1" height="1" fill="#222"/><rect x="328" y="289" width="1" height="1" fill="#222"/><rect x="328" y="291" width="1" height="1" fill="#222"/><rect x="328" y="293" width="1" height="1" fill="#222"/><rect x="328" y="295" width="1" height="1" fill="#222"/><rect x="328" y="297" width="1" height="1" fill="#222"/><rect x="328" y="299" width="1" height="1" fill="#222"/><rect x="328" y="301" width="1" height="1" fill="#222"/><rect x="328" y="303" width="1" height="1" fill="#222"/><rect x="328" y="305" width="1" height="1" fill="#222"/><rect x="328" y="307" width="1" height="1" fill="#222"/><rect x="328" y="309" width="1" height="1" fill="#222"/><rect x="328" y="311" width="1" height="1" fill="#222"/><rect x="328" y="313" width="1" height="1" fill="#222"/><rect x="328" y="315" width="1" height="1" fill="#222"/><rect x="328" y="317" width="1" height="1" fill="#222"/><rect x="328" y="319" width="1" height="1" fill="#222"/><rect x="328" y="321" width="1" height="1" fill="#222"/><rect x="328" y="323" width="1" height="1" fill="#222"/><rect x="328" y="325" width="1" height="1" fill="#222"/><rect x="328" y="327" width="1" height="1" fill="#222"/><rect x="328" y="329" width="1" height="1" fill="#222"/><rect x="328" y="331" width="1" height="1" fill="#222"/><rect x="328" y="333" width="1" height="1" fill="#222"/><rect x="328" y="335" width="1" height="1" fill="#222"/><rect x="328" y="337" width="1" height="1" fill="#222"/><rect x="328" y="339" width="1" height="1" fill="#222"/><rect x="328" y="341" width="1" height="1" fill="#222"/><rect x="328" y="343" width="1" height="1" fill="#222"/><rect x="328" y="345" width="1" height="1" fill="#222"/><rect x="328" y="347" width="1" height="1" fill="#222"/><rect x="328" y="349" width="1" height="1" fill="#222"/><rect x="328" y="351" width="1" height="1" fill="#222"/><rect x="328" y="353" width="1" height="1" fill="#222"/><rect x="328" y="355" width="1" height="1" fill="#222"/><rect x="328" y="357" width="1" height="1" fill="#222"/><rect x="328" y="359" width="1" height="1" fill="#222"/><rect x="328" y="361" width="1" height="1" fill="#222"/><rect x="328" y="363" width="1" height="1" fill="#222"/><rect x="328" y="365" width="1" height="1" fill="#222"/><rect x="328" y="367" width="1" height="1" fill="#222"/><rect x="328" y="369" width="1" height="1" fill="#222"/><rect x="328" y="371" width="1" height="1" fill="#222"/><rect x="328" y="373" width="1" height="1" fill="#222"/><rect x="328" y="375" width="1" height="1" fill="#222"/><rect x="328" y="377" width="1" height="1" fill="#222"/><rect x="328" y="379" width="1" height="1" fill="#222"/><rect x="328" y="381" width="1" height="1" fill="#222"/><rect x="328" y="383" width="1" height="1" fill="#222"/><rect x="328" y="385" width="1" height="1" fill="#222"/><rect x="328" y="387" width="1" height="1" fill="#222"/><rect x="328" y="389" width="1" height="1" fill="#222"/><rect x="328" y="391" width="1" height="1" fill="#222"/><rect x="328" y="393" width="1" height="1" fill="#222"/><rect x="328" y="395" width="1" height="1" fill="#222"/><rect x="328" y="397" width="1" height="1" fill="#222"/><rect x="328" y="399" width="1" height="1" fill="#222"/><rect x="328" y="401" width="1" height="1" fill="#222"/><rect x="328" y="403" width="1" height="1" fill="#222"/><rect x="328" y="405" width="1" height="1" fill="#222"/><rect x="328" y="407" width="1" height="1" fill="#222"/><rect x="328" y="409" width="1" height="1" fill="#222"/><rect x="328" y="411" width="1" height="1" fill="#222"/><rect x="328" y="413" width="1" height="1" fill="#222"/><rect x="328" y="415" width="1" height="1" fill="#222"/><rect x="328" y="417" width="1" height="1" fill="#222"/><rect x="328" y="419" width="1" height="1" fill="#222"/><rect x="328" y="421" width="1" height="1" fill="#222"/><rect x="328" y="423" width="1" height="1" fill="#222"/><rect x="328" y="425" width="1" height="1" fill="#222"/><rect x="328" y="427" width="1" height="1" fill="#222"/><rect x="328" y="429" width="1" height="1" fill="#222"/><rect x="328" y="431" width="1" height="1" fill="#222"/><rect x="28" y="365" width="1" height="1" fill="#2a2a2a"/><rect x="30" y="365" width="1" height="1" fill="#2a2a2a"/><rect x="32" y="365" width="1" height="1" fill="#2a2a2a"/><rect x="34" y="365" width="1" height="1" fill="#2a2a2a"/><rect x="36" y="365" width="1" height="1" fill="#2a2a2a"/><rect x="38" y="365" width="1" height="1" fill="#2a2a2a"/><rect x="40" y="365" width="1" height="1" fill="#2a2a2a"/><rect x="42" y="365" width="1" height="1" fill="#2a2a2a"/><rect x="44" y="365" width="1" height="1" fill="#2a2a2a"/><rect x="46" y="365" width="1" height="1" fill="#2a2a2a"/><rect x="48" y="365" width="1" height="1" fill="#2a2a2a"/><rect x="50" y="365" width="1" height="1" fill="#2a2a2a"/><rect x="52" y="365" width="1" height="1" fill="#2a2a2a"/><rect x="54" y="365" width="1" height="1" fill="#2a2a2a"/><rect x="56" y="365" width="1" height="1" fill="#2a2a2a"/><rect x="58" y="365" width="1" height="1" fill="#2a2a2a"/><rect x="60" y="365" width="1" height="1" fill="#2a2a2a"/><rect x="62" y="365" width="1" height="1" fill="#2a2a2a"/><rect x="64" y="365" width="1" height="1" fill="#2a2a2a"/><rect x="66" y="365" width="1" height="1" fill="#2a2a2a"/><rect x="68" y="365" width="1" height="1" fill="#2a2a2a"/><rect x="70" y="365" width="1" height="1" fill="#2a2a2a"/><rect x="72" y="365" width="1" height="1" fill="#2a2a2a"/><rect x="74" y="365" width="1" height="1" fill="#2a2a2a"/><rect x="76" y="365" width="1" height="1" fill="#2a2a2a"/><rect x="78" y="365" width="1" height="1" fill="#2a2a2a"/><rect x="80" y="365" width="1" height="1" fill="#2a2a2a"/><rect x="82" y="365" width="1" height="1" fill="#2a2a2a"/><rect x="84" y="365" width="1" height="1" fill="#2a2a2a"/><rect x="86" y="365" width="1" height="1" fill="#2a2a2a"/><rect x="88" y="365" width="1" height="1" fill="#2a2a2a"/><rect x="90" y="365" width="1" height="1" fill="#2a2a2a"/><rect x="92" y="365" width="1" height="1" fill="#2a2a2a"/><rect x="94" y="365" width="1" height="1" fill="#2a2a2a"/><rect x="96" y="365" width="1" height="1" fill="#2a2a2a"/><rect x="98" y="365" width="1" height="1" fill="#2a2a2a"/><rect x="100" y="365" width="1" height="1" fill="#2a2a2a"/><rect x="102" y="365" width="1" height="1" fill="#2a2a2a"/><rect x="104" y="365" width="1" height="1" fill="#2a2a2a"/><rect x="106" y="365" width="1" height="1" fill="#2a2a2a"/><rect x="108" y="365" width="1" height="1" fill="#2a2a2a"/><rect x="110" y="365" width="1" height="1" fill="#2a2a2a"/><rect x="112" y="365" width="1" height="1" fill="#2a2a2a"/><rect x="114" y="365" width="1" height="1" fill="#2a2a2a"/><rect x="116" y="365" width="1" height="1" fill="#2a2a2a"/><rect x="118" y="365" width="1" height="1" fill="#2a2a2a"/><rect x="120" y="365" width="1" height="1" fill="#2a2a2a"/><rect x="122" y="365" width="1" height="1" fill="#2a2a2a"/><rect x="124" y="365" width="1" height="1" fill="#2a2a2a"/><rect x="126" y="365" width="1" height="1" fill="#2a2a2a"/><rect x="128" y="365" width="1" height="1" fill="#2a2a2a"/><rect x="130" y="365" width="1" height="1" fill="#2a2a2a"/><rect x="132" y="365" width="1" height="1" fill="#2a2a2a"/><rect x="134" y="365" width="1" height="1" fill="#2a2a2a"/><rect x="136" y="365" width="1" height="1" fill="#2a2a2a"/><rect x="138" y="365" width="1" height="1" fill="#2a2a2a"/><rect x="140" y="365" width="1" height="1" fill="#2a2a2a"/><rect x="142" y="365" width="1" height="1" fill="#2a2a2a"/><rect x="144" y="365" width="1" height="1" fill="#2a2a2a"/><rect x="146" y="365" width="1" height="1" fill="#2a2a2a"/><rect x="148" y="365" width="1" height="1" fill="#2a2a2a"/><rect x="150" y="365" width="1" height="1" fill="#2a2a2a"/><rect x="152" y="365" width="1" height="1" fill="#2a2a2a"/><rect x="154" y="365" width="1" height="1" fill="#2a2a2a"/><rect x="156" y="365" width="1" height="1" fill="#2a2a2a"/><rect x="158" y="365" width="1" height="1" fill="#2a2a2a"/><rect x="160" y="365" width="1" height="1" fill="#2a2a2a"/><rect x="162" y="365" width="1" height="1" fill="#2a2a2a"/><rect x="164" y="365" width="1" height="1" fill="#2a2a2a"/><rect x="166" y="365" width="1" height="1" fill="#2a2a2a"/><rect x="168" y="365" width="1" height="1" fill="#2a2a2a"/><rect x="170" y="365" width="1" height="1" fill="#2a2a2a"/><rect x="172" y="365" width="1" height="1" fill="#2a2a2a"/><rect x="174" y="365" width="1" height="1" fill="#2a2a2a"/><rect x="176" y="365" width="1" height="1" fill="#2a2a2a"/><rect x="178" y="365" width="1" height="1" fill="#2a2a2a"/><rect x="180" y="365" width="1" height="1" fill="#2a2a2a"/><rect x="182" y="365" width="1" height="1" fill="#2a2a2a"/><rect x="184" y="365" width="1" height="1" fill="#2a2a2a"/><rect x="186" y="365" width="1" height="1" fill="#2a2a2a"/><rect x="188" y="365" width="1" height="1" fill="#2a2a2a"/><rect x="190" y="365" width="1" height="1" fill="#2a2a2a"/><rect x="192" y="365" width="1" height="1" fill="#2a2a2a"/><rect x="194" y="365" width="1" height="1" fill="#2a2a2a"/><rect x="196" y="365" width="1" height="1" fill="#2a2a2a"/><rect x="198" y="365" width="1" height="1" fill="#2a2a2a"/><rect x="200" y="365" width="1" height="1" fill="#2a2a2a"/><rect x="202" y="365" width="1" height="1" fill="#2a2a2a"/><rect x="204" y="365" width="1" height="1" fill="#2a2a2a"/><rect x="206" y="365" width="1" height="1" fill="#2a2a2a"/><rect x="208" y="365" width="1" height="1" fill="#2a2a2a"/><rect x="210" y="365" width="1" height="1" fill="#2a2a2a"/><rect x="212" y="365" width="1" height="1" fill="#2a2a2a"/><rect x="214" y="365" width="1" height="1" fill="#2a2a2a"/><rect x="216" y="365" width="1" height="1" fill="#2a2a2a"/><rect x="218" y="365" width="1" height="1" fill="#2a2a2a"/><rect x="220" y="365" width="1" height="1" fill="#2a2a2a"/><rect x="222" y="365" width="1" height="1" fill="#2a2a2a"/><rect x="224" y="365" width="1" height="1" fill="#2a2a2a"/><rect x="226" y="365" width="1" height="1" fill="#2a2a2a"/><rect x="228" y="365" width="1" height="1" fill="#2a2a2a"/><rect x="230" y="365" width="1" height="1" fill="#2a2a2a"/><rect x="232" y="365" width="1" height="1" fill="#2a2a2a"/><rect x="234" y="365" width="1" height="1" fill="#2a2a2a"/><rect x="236" y="365" width="1" height="1" fill="#2a2a2a"/><rect x="238" y="365" width="1" height="1" fill="#2a2a2a"/><rect x="240" y="365" width="1" height="1" fill="#2a2a2a"/><rect x="242" y="365" width="1" height="1" fill="#2a2a2a"/><rect x="244" y="365" width="1" height="1" fill="#2a2a2a"/><rect x="246" y="365" width="1" height="1" fill="#2a2a2a"/><rect x="248" y="365" width="1" height="1" fill="#2a2a2a"/><rect x="250" y="365" width="1" height="1" fill="#2a2a2a"/><rect x="252" y="365" width="1" height="1" fill="#2a2a2a"/><rect x="254" y="365" width="1" height="1" fill="#2a2a2a"/><rect x="256" y="365" width="1" height="1" fill="#2a2a2a"/><rect x="258" y="365" width="1" height="1" fill="#2a2a2a"/><rect x="260" y="365" width="1" height="1" fill="#2a2a2a"/><rect x="262" y="365" width="1" height="1" fill="#2a2a2a"/><rect x="264" y="365" width="1" height="1" fill="#2a2a2a"/><rect x="266" y="365" width="1" height="1" fill="#2a2a2a"/><rect x="268" y="365" width="1" height="1" fill="#2a2a2a"/><rect x="270" y="365" width="1" height="1" fill="#2a2a2a"/><rect x="272" y="365" width="1" height="1" fill="#2a2a2a"/><rect x="274" y="365" width="1" height="1" fill="#2a2a2a"/><rect x="276" y="365" width="1" height="1" fill="#2a2a2a"/><rect x="278" y="365" width="1" height="1" fill="#2a2a2a"/><rect x="280" y="365" width="1" height="1" fill="#2a2a2a"/><rect x="282" y="365" width="1" height="1" fill="#2a2a2a"/><rect x="284" y="365" width="1" height="1" fill="#2a2a2a"/><rect x="286" y="365" width="1" height="1" fill="#2a2a2a"/><rect x="288" y="365" width="1" height="1" fill="#2a2a2a"/><rect x="290" y="365" width="1" height="1" fill="#2a2a2a"/><rect x="292" y="365" width="1" height="1" fill="#2a2a2a"/><rect x="294" y="365" width="1" height="1" fill="#2a2a2a"/><rect x="296" y="365" width="1" height="1" fill="#2a2a2a"/><rect x="298" y="365" width="1" height="1" fill="#2a2a2a"/><rect x="300" y="365" width="1" height="1" fill="#2a2a2a"/><rect x="302" y="365" width="1" height="1" fill="#2a2a2a"/><rect x="304" y="365" width="1" height="1" fill="#2a2a2a"/><rect x="306" y="365" width="1" height="1" fill="#2a2a2a"/><rect x="308" y="365" width="1" height="1" fill="#2a2a2a"/><rect x="310" y="365" width="1" height="1" fill="#2a2a2a"/><rect x="312" y="365" width="1" height="1" fill="#2a2a2a"/><rect x="314" y="365" width="1" height="1" fill="#2a2a2a"/><rect x="316" y="365" width="1" height="1" fill="#2a2a2a"/><rect x="318" y="365" width="1" height="1" fill="#2a2a2a"/><rect x="320" y="365" width="1" height="1" fill="#2a2a2a"/><rect x="322" y="365" width="1" height="1" fill="#2a2a2a"/><rect x="324" y="365" width="1" height="1" fill="#2a2a2a"/><rect x="326" y="365" width="1" height="1" fill="#2a2a2a"/><rect x="328" y="365" width="1" height="1" fill="#2a2a2a"/><rect x="330" y="365" width="1" height="1" fill="#2a2a2a"/><rect x="332" y="365" width="1" height="1" fill="#2a2a2a"/><rect x="334" y="365" width="1" height="1" fill="#2a2a2a"/><rect x="336" y="365" width="1" height="1" fill="#2a2a2a"/><rect x="338" y="365" width="1" height="1" fill="#2a2a2a"/><rect x="340" y="365" width="1" height="1" fill="#2a2a2a"/><rect x="342" y="365" width="1" height="1" fill="#2a2a2a"/><rect x="344" y="365" width="1" height="1" fill="#2a2a2a"/><rect x="346" y="365" width="1" height="1" fill="#2a2a2a"/><rect x="348" y="365" width="1" height="1" fill="#2a2a2a"/><rect x="350" y="365" width="1" height="1" fill="#2a2a2a"/><rect x="352" y="365" width="1" height="1" fill="#2a2a2a"/><rect x="354" y="365" width="1" height="1" fill="#2a2a2a"/><rect x="356" y="365" width="1" height="1" fill="#2a2a2a"/><rect x="358" y="365" width="1" height="1" fill="#2a2a2a"/><rect x="360" y="365" width="1" height="1" fill="#2a2a2a"/><rect x="362" y="365" width="1" height="1" fill="#2a2a2a"/><rect x="364" y="365" width="1" height="1" fill="#2a2a2a"/><rect x="366" y="365" width="1" height="1" fill="#2a2a2a"/><rect x="368" y="365" width="1" height="1" fill="#2a2a2a"/><rect x="370" y="365" width="1" height="1" fill="#2a2a2a"/><rect x="372" y="365" width="1" height="1" fill="#2a2a2a"/><rect x="374" y="365" width="1" height="1" fill="#2a2a2a"/><rect x="376" y="365" width="1" height="1" fill="#2a2a2a"/><rect x="378" y="365" width="1" height="1" fill="#2a2a2a"/><rect x="380" y="365" width="1" height="1" fill="#2a2a2a"/><rect x="382" y="365" width="1" height="1" fill="#2a2a2a"/><rect x="33" y="94" width="1" height="1" fill="#3e3e3e"/><rect x="33" y="106" width="1" height="1" fill="#3e3e3e"/><rect x="33" y="118" width="1" height="1" fill="#3e3e3e"/><rect x="33" y="129" width="1" height="1" fill="#3e3e3e"/><rect x="33" y="141" width="1" height="1" fill="#3e3e3e"/><rect x="33" y="153" width="1" height="1" fill="#3e3e3e"/><rect x="33" y="165" width="1" height="1" fill="#3e3e3e"/><rect x="33" y="176" width="1" height="1" fill="#3e3e3e"/><rect x="33" y="188" width="1" height="1" fill="#3e3e3e"/><rect x="33" y="200" width="1" height="1" fill="#3e3e3e"/><rect x="33" y="212" width="1" height="1" fill="#3e3e3e"/><rect x="33" y="223" width="1" height="1" fill="#3e3e3e"/><rect x="33" y="235" width="1" height="1" fill="#3e3e3e"/><rect x="33" y="247" width="1" height="1" fill="#3e3e3e"/><rect x="33" y="259" width="1" height="1" fill="#3e3e3e"/><rect x="33" y="271" width="1" height="1" fill="#3e3e3e"/><rect x="33" y="282" width="1" height="1" fill="#3e3e3e"/><rect x="33" y="294" width="1" height="1" fill="#3e3e3e"/><rect x="33" y="306" width="1" height="1" fill="#3e3e3e"/><rect x="33" y="318" width="1" height="1" fill="#3e3e3e"/><rect x="33" y="329" width="1" height="1" fill="#3e3e3e"/><rect x="33" y="341" width="1" height="1" fill="#3e3e3e"/><rect x="33" y="353" width="1" height="1" fill="#3e3e3e"/><rect x="33" y="365" width="1" height="1" fill="#3e3e3e"/><rect x="33" y="376" width="1" height="1" fill="#3e3e3e"/><rect x="33" y="388" width="1" height="1" fill="#3e3e3e"/><rect x="33" y="400" width="1" height="1" fill="#3e3e3e"/><rect x="33" y="412" width="1" height="1" fill="#3e3e3e"/><rect x="33" y="424" width="1" height="1" fill="#3e3e3e"/><rect x="45" y="94" width="1" height="1" fill="#3e3e3e"/><rect x="45" y="106" width="1" height="1" fill="#3e3e3e"/><rect x="45" y="118" width="1" height="1" fill="#3e3e3e"/><rect x="45" y="129" width="1" height="1" fill="#3e3e3e"/><rect x="45" y="141" width="1" height="1" fill="#3e3e3e"/><rect x="45" y="153" width="1" height="1" fill="#3e3e3e"/><rect x="45" y="165" width="1" height="1" fill="#3e3e3e"/><rect x="45" y="176" width="1" height="1" fill="#3e3e3e"/><rect x="45" y="188" width="1" height="1" fill="#3e3e3e"/><rect x="45" y="200" width="1" height="1" fill="#3e3e3e"/><rect x="45" y="212" width="1" height="1" fill="#3e3e3e"/><rect x="45" y="223" width="1" height="1" fill="#3e3e3e"/><rect x="45" y="235" width="1" height="1" fill="#3e3e3e"/><rect x="45" y="247" width="1" height="1" fill="#3e3e3e"/><rect x="45" y="259" width="1" height="1" fill="#3e3e3e"/><rect x="45" y="271" width="1" height="1" fill="#3e3e3e"/><rect x="45" y="282" width="1" height="1" fill="#3e3e3e"/><rect x="45" y="294" width="1" height="1" fill="#3e3e3e"/><rect x="45" y="306" width="1" height="1" fill="#3e3e3e"/><rect x="45" y="318" width="1" height="1" fill="#3e3e3e"/><rect x="45" y="329" width="1" height="1" fill="#3e3e3e"/><rect x="45" y="341" width="1" height="1" fill="#3e3e3e"/><rect x="45" y="353" width="1" height="1" fill="#3e3e3e"/><rect x="45" y="365" width="1" height="1" fill="#3e3e3e"/><rect x="45" y="376" width="1" height="1" fill="#3e3e3e"/><rect x="45" y="388" width="1" height="1" fill="#3e3e3e"/><rect x="45" y="400" width="1" height="1" fill="#3e3e3e"/><rect x="45" y="412" width="1" height="1" fill="#3e3e3e"/><rect x="45" y="424" width="1" height="1" fill="#3e3e3e"/><rect x="57" y="94" width="1" height="1" fill="#3e3e3e"/><rect x="57" y="106" width="1" height="1" fill="#3e3e3e"/><rect x="57" y="118" width="1" height="1" fill="#3e3e3e"/><rect x="57" y="129" width="1" height="1" fill="#3e3e3e"/><rect x="57" y="141" width="1" height="1" fill="#3e3e3e"/><rect x="57" y="153" width="1" height="1" fill="#3e3e3e"/><rect x="57" y="165" width="1" height="1" fill="#3e3e3e"/><rect x="57" y="176" width="1" height="1" fill="#3e3e3e"/><rect x="57" y="188" width="1" height="1" fill="#3e3e3e"/><rect x="57" y="200" width="1" height="1" fill="#3e3e3e"/><rect x="57" y="212" width="1" height="1" fill="#3e3e3e"/><rect x="57" y="223" width="1" height="1" fill="#3e3e3e"/><rect x="57" y="235" width="1" height="1" fill="#3e3e3e"/><rect x="57" y="247" width="1" height="1" fill="#3e3e3e"/><rect x="57" y="259" width="1" height="1" fill="#3e3e3e"/><rect x="57" y="271" width="1" height="1" fill="#3e3e3e"/><rect x="57" y="282" width="1" height="1" fill="#3e3e3e"/><rect x="57" y="294" width="1" height="1" fill="#3e3e3e"/><rect x="57" y="306" width="1" height="1" fill="#3e3e3e"/><rect x="57" y="318" width="1" height="1" fill="#3e3e3e"/><rect x="57" y="329" width="1" height="1" fill="#3e3e3e"/><rect x="57" y="341" width="1" height="1" fill="#3e3e3e"/><rect x="57" y="353" width="1" height="1" fill="#3e3e3e"/><rect x="57" y="365" width="1" height="1" fill="#3e3e3e"/><rect x="57" y="376" width="1" height="1" fill="#3e3e3e"/><rect x="57" y="388" width="1" height="1" fill="#3e3e3e"/><rect x="57" y="400" width="1" height="1" fill="#3e3e3e"/><rect x="57" y="412" width="1" height="1" fill="#3e3e3e"/><rect x="57" y="424" width="1" height="1" fill="#3e3e3e"/><rect x="69" y="94" width="1" height="1" fill="#3e3e3e"/><rect x="69" y="106" width="1" height="1" fill="#3e3e3e"/><rect x="69" y="118" width="1" height="1" fill="#3e3e3e"/><rect x="69" y="129" width="1" height="1" fill="#3e3e3e"/><rect x="69" y="141" width="1" height="1" fill="#3e3e3e"/><rect x="69" y="153" width="1" height="1" fill="#3e3e3e"/><rect x="69" y="165" width="1" height="1" fill="#3e3e3e"/><rect x="69" y="176" width="1" height="1" fill="#3e3e3e"/><rect x="69" y="188" width="1" height="1" fill="#3e3e3e"/><rect x="69" y="200" width="1" height="1" fill="#3e3e3e"/><rect x="69" y="212" width="1" height="1" fill="#3e3e3e"/><rect x="69" y="223" width="1" height="1" fill="#3e3e3e"/><rect x="69" y="235" width="1" height="1" fill="#3e3e3e"/><rect x="69" y="247" width="1" height="1" fill="#3e3e3e"/><rect x="69" y="259" width="1" height="1" fill="#3e3e3e"/><rect x="69" y="271" width="1" height="1" fill="#3e3e3e"/><rect x="69" y="282" width="1" height="1" fill="#3e3e3e"/><rect x="69" y="294" width="1" height="1" fill="#3e3e3e"/><rect x="69" y="306" width="1" height="1" fill="#3e3e3e"/><rect x="69" y="318" width="1" height="1" fill="#3e3e3e"/><rect x="69" y="329" width="1" height="1" fill="#3e3e3e"/><rect x="69" y="341" width="1" height="1" fill="#3e3e3e"/><rect x="69" y="353" width="1" height="1" fill="#3e3e3e"/><rect x="69" y="365" width="1" height="1" fill="#3e3e3e"/><rect x="69" y="376" width="1" height="1" fill="#3e3e3e"/><rect x="69" y="388" width="1" height="1" fill="#3e3e3e"/><rect x="69" y="400" width="1" height="1" fill="#3e3e3e"/><rect x="69" y="412" width="1" height="1" fill="#3e3e3e"/><rect x="69" y="424" width="1" height="1" fill="#3e3e3e"/><rect x="81" y="94" width="1" height="1" fill="#3e3e3e"/><rect x="81" y="106" width="1" height="1" fill="#3e3e3e"/><rect x="81" y="118" width="1" height="1" fill="#3e3e3e"/><rect x="81" y="129" width="1" height="1" fill="#3e3e3e"/><rect x="81" y="141" width="1" height="1" fill="#3e3e3e"/><rect x="81" y="153" width="1" height="1" fill="#3e3e3e"/><rect x="81" y="165" width="1" height="1" fill="#3e3e3e"/><rect x="81" y="176" width="1" height="1" fill="#3e3e3e"/><rect x="81" y="188" width="1" height="1" fill="#3e3e3e"/><rect x="81" y="200" width="1" height="1" fill="#3e3e3e"/><rect x="81" y="212" width="1" height="1" fill="#3e3e3e"/><rect x="81" y="223" width="1" height="1" fill="#3e3e3e"/><rect x="81" y="235" width="1" height="1" fill="#3e3e3e"/><rect x="81" y="247" width="1" height="1" fill="#3e3e3e"/><rect x="81" y="259" width="1" height="1" fill="#3e3e3e"/><rect x="81" y="271" width="1" height="1" fill="#3e3e3e"/><rect x="81" y="282" width="1" height="1" fill="#3e3e3e"/><rect x="81" y="294" width="1" height="1" fill="#3e3e3e"/><rect x="81" y="306" width="1" height="1" fill="#3e3e3e"/><rect x="81" y="318" width="1" height="1" fill="#3e3e3e"/><rect x="81" y="329" width="1" height="1" fill="#3e3e3e"/><rect x="81" y="341" width="1" height="1" fill="#3e3e3e"/><rect x="81" y="353" width="1" height="1" fill="#3e3e3e"/><rect x="81" y="365" width="1" height="1" fill="#3e3e3e"/><rect x="81" y="376" width="1" height="1" fill="#3e3e3e"/><rect x="81" y="388" width="1" height="1" fill="#3e3e3e"/><rect x="81" y="400" width="1" height="1" fill="#3e3e3e"/><rect x="81" y="412" width="1" height="1" fill="#3e3e3e"/><rect x="81" y="424" width="1" height="1" fill="#3e3e3e"/><rect x="92" y="94" width="1" height="1" fill="#3e3e3e"/><rect x="92" y="106" width="1" height="1" fill="#3e3e3e"/><rect x="92" y="118" width="1" height="1" fill="#3e3e3e"/><rect x="92" y="129" width="1" height="1" fill="#3e3e3e"/><rect x="92" y="141" width="1" height="1" fill="#3e3e3e"/><rect x="92" y="153" width="1" height="1" fill="#3e3e3e"/><rect x="92" y="165" width="1" height="1" fill="#3e3e3e"/><rect x="92" y="176" width="1" height="1" fill="#3e3e3e"/><rect x="92" y="188" width="1" height="1" fill="#3e3e3e"/><rect x="92" y="200" width="1" height="1" fill="#3e3e3e"/><rect x="92" y="212" width="1" height="1" fill="#3e3e3e"/><rect x="92" y="223" width="1" height="1" fill="#3e3e3e"/><rect x="92" y="235" width="1" height="1" fill="#3e3e3e"/><rect x="92" y="247" width="1" height="1" fill="#3e3e3e"/><rect x="92" y="259" width="1" height="1" fill="#3e3e3e"/><rect x="92" y="271" width="1" height="1" fill="#3e3e3e"/><rect x="92" y="282" width="1" height="1" fill="#3e3e3e"/><rect x="92" y="294" width="1" height="1" fill="#3e3e3e"/><rect x="92" y="306" width="1" height="1" fill="#3e3e3e"/><rect x="92" y="318" width="1" height="1" fill="#3e3e3e"/><rect x="92" y="329" width="1" height="1" fill="#3e3e3e"/><rect x="92" y="341" width="1" height="1" fill="#3e3e3e"/><rect x="92" y="353" width="1" height="1" fill="#3e3e3e"/><rect x="92" y="365" width="1" height="1" fill="#3e3e3e"/><rect x="92" y="376" width="1" height="1" fill="#3e3e3e"/><rect x="92" y="388" width="1" height="1" fill="#3e3e3e"/><rect x="92" y="400" width="1" height="1" fill="#3e3e3e"/><rect x="92" y="412" width="1" height="1" fill="#3e3e3e"/><rect x="92" y="424" width="1" height="1" fill="#3e3e3e"/><rect x="104" y="94" width="1" height="1" fill="#3e3e3e"/><rect x="104" y="106" width="1" height="1" fill="#3e3e3e"/><rect x="104" y="118" width="1" height="1" fill="#3e3e3e"/><rect x="104" y="129" width="1" height="1" fill="#3e3e3e"/><rect x="104" y="141" width="1" height="1" fill="#3e3e3e"/><rect x="104" y="153" width="1" height="1" fill="#3e3e3e"/><rect x="104" y="165" width="1" height="1" fill="#3e3e3e"/><rect x="104" y="176" width="1" height="1" fill="#3e3e3e"/><rect x="104" y="188" width="1" height="1" fill="#3e3e3e"/><rect x="104" y="200" width="1" height="1" fill="#3e3e3e"/><rect x="104" y="212" width="1" height="1" fill="#3e3e3e"/><rect x="104" y="223" width="1" height="1" fill="#3e3e3e"/><rect x="104" y="235" width="1" height="1" fill="#3e3e3e"/><rect x="104" y="247" width="1" height="1" fill="#3e3e3e"/><rect x="104" y="259" width="1" height="1" fill="#3e3e3e"/><rect x="104" y="271" width="1" height="1" fill="#3e3e3e"/><rect x="104" y="282" width="1" height="1" fill="#3e3e3e"/><rect x="104" y="294" width="1" height="1" fill="#3e3e3e"/><rect x="104" y="306" width="1" height="1" fill="#3e3e3e"/><rect x="104" y="318" width="1" height="1" fill="#3e3e3e"/><rect x="104" y="329" width="1" height="1" fill="#3e3e3e"/><rect x="104" y="341" width="1" height="1" fill="#3e3e3e"/><rect x="104" y="353" width="1" height="1" fill="#3e3e3e"/><rect x="104" y="365" width="1" height="1" fill="#3e3e3e"/><rect x="104" y="376" width="1" height="1" fill="#3e3e3e"/><rect x="104" y="388" width="1" height="1" fill="#3e3e3e"/><rect x="104" y="400" width="1" height="1" fill="#3e3e3e"/><rect x="104" y="412" width="1" height="1" fill="#3e3e3e"/><rect x="104" y="424" width="1" height="1" fill="#3e3e3e"/><rect x="116" y="94" width="1" height="1" fill="#3e3e3e"/><rect x="116" y="106" width="1" height="1" fill="#3e3e3e"/><rect x="116" y="118" width="1" height="1" fill="#3e3e3e"/><rect x="116" y="129" width="1" height="1" fill="#3e3e3e"/><rect x="116" y="141" width="1" height="1" fill="#3e3e3e"/><rect x="116" y="153" width="1" height="1" fill="#3e3e3e"/><rect x="116" y="165" width="1" height="1" fill="#3e3e3e"/><rect x="116" y="176" width="1" height="1" fill="#3e3e3e"/><rect x="116" y="188" width="1" height="1" fill="#3e3e3e"/><rect x="116" y="200" width="1" height="1" fill="#3e3e3e"/><rect x="116" y="212" width="1" height="1" fill="#3e3e3e"/><rect x="116" y="223" width="1" height="1" fill="#3e3e3e"/><rect x="116" y="235" width="1" height="1" fill="#3e3e3e"/><rect x="116" y="247" width="1" height="1" fill="#3e3e3e"/><rect x="116" y="259" width="1" height="1" fill="#3e3e3e"/><rect x="116" y="271" width="1" height="1" fill="#3e3e3e"/><rect x="116" y="282" width="1" height="1" fill="#3e3e3e"/><rect x="116" y="294" width="1" height="1" fill="#3e3e3e"/><rect x="116" y="306" width="1" height="1" fill="#3e3e3e"/><rect x="116" y="318" width="1" height="1" fill="#3e3e3e"/><rect x="116" y="329" width="1" height="1" fill="#3e3e3e"/><rect x="116" y="341" width="1" height="1" fill="#3e3e3e"/><rect x="116" y="353" width="1" height="1" fill="#3e3e3e"/><rect x="116" y="365" width="1" height="1" fill="#3e3e3e"/><rect x="116" y="376" width="1" height="1" fill="#3e3e3e"/><rect x="116" y="388" width="1" height="1" fill="#3e3e3e"/><rect x="116" y="400" width="1" height="1" fill="#3e3e3e"/><rect x="116" y="412" width="1" height="1" fill="#3e3e3e"/><rect x="116" y="424" width="1" height="1" fill="#3e3e3e"/><rect x="128" y="94" width="1" height="1" fill="#3e3e3e"/><rect x="128" y="106" width="1" height="1" fill="#3e3e3e"/><rect x="128" y="118" width="1" height="1" fill="#3e3e3e"/><rect x="128" y="129" width="1" height="1" fill="#3e3e3e"/><rect x="128" y="141" width="1" height="1" fill="#3e3e3e"/><rect x="128" y="153" width="1" height="1" fill="#3e3e3e"/><rect x="128" y="165" width="1" height="1" fill="#3e3e3e"/><rect x="128" y="176" width="1" height="1" fill="#3e3e3e"/><rect x="128" y="188" width="1" height="1" fill="#3e3e3e"/><rect x="128" y="200" width="1" height="1" fill="#3e3e3e"/><rect x="128" y="212" width="1" height="1" fill="#3e3e3e"/><rect x="128" y="223" width="1" height="1" fill="#3e3e3e"/><rect x="128" y="235" width="1" height="1" fill="#3e3e3e"/><rect x="128" y="247" width="1" height="1" fill="#3e3e3e"/><rect x="128" y="259" width="1" height="1" fill="#3e3e3e"/><rect x="128" y="271" width="1" height="1" fill="#3e3e3e"/><rect x="128" y="282" width="1" height="1" fill="#3e3e3e"/><rect x="128" y="294" width="1" height="1" fill="#3e3e3e"/><rect x="128" y="306" width="1" height="1" fill="#3e3e3e"/><rect x="128" y="318" width="1" height="1" fill="#3e3e3e"/><rect x="128" y="329" width="1" height="1" fill="#3e3e3e"/><rect x="128" y="341" width="1" height="1" fill="#3e3e3e"/><rect x="128" y="353" width="1" height="1" fill="#3e3e3e"/><rect x="128" y="365" width="1" height="1" fill="#3e3e3e"/><rect x="128" y="376" width="1" height="1" fill="#3e3e3e"/><rect x="128" y="388" width="1" height="1" fill="#3e3e3e"/><rect x="128" y="400" width="1" height="1" fill="#3e3e3e"/><rect x="128" y="412" width="1" height="1" fill="#3e3e3e"/><rect x="128" y="424" width="1" height="1" fill="#3e3e3e"/><rect x="139" y="94" width="1" height="1" fill="#3e3e3e"/><rect x="139" y="106" width="1" height="1" fill="#3e3e3e"/><rect x="139" y="118" width="1" height="1" fill="#3e3e3e"/><rect x="139" y="129" width="1" height="1" fill="#3e3e3e"/><rect x="139" y="141" width="1" height="1" fill="#3e3e3e"/><rect x="139" y="153" width="1" height="1" fill="#3e3e3e"/><rect x="139" y="165" width="1" height="1" fill="#3e3e3e"/><rect x="139" y="176" width="1" height="1" fill="#3e3e3e"/><rect x="139" y="188" width="1" height="1" fill="#3e3e3e"/><rect x="139" y="200" width="1" height="1" fill="#3e3e3e"/><rect x="139" y="212" width="1" height="1" fill="#3e3e3e"/><rect x="139" y="223" width="1" height="1" fill="#3e3e3e"/><rect x="139" y="235" width="1" height="1" fill="#3e3e3e"/><rect x="139" y="247" width="1" height="1" fill="#3e3e3e"/><rect x="139" y="259" width="1" height="1" fill="#3e3e3e"/><rect x="139" y="271" width="1" height="1" fill="#3e3e3e"/><rect x="139" y="282" width="1" height="1" fill="#3e3e3e"/><rect x="139" y="294" width="1" height="1" fill="#3e3e3e"/><rect x="139" y="306" width="1" height="1" fill="#3e3e3e"/><rect x="139" y="318" width="1" height="1" fill="#3e3e3e"/><rect x="139" y="329" width="1" height="1" fill="#3e3e3e"/><rect x="139" y="341" width="1" height="1" fill="#3e3e3e"/><rect x="139" y="353" width="1" height="1" fill="#3e3e3e"/><rect x="139" y="365" width="1" height="1" fill="#3e3e3e"/><rect x="139" y="376" width="1" height="1" fill="#3e3e3e"/><rect x="139" y="388" width="1" height="1" fill="#3e3e3e"/><rect x="139" y="400" width="1" height="1" fill="#3e3e3e"/><rect x="139" y="412" width="1" height="1" fill="#3e3e3e"/><rect x="139" y="424" width="1" height="1" fill="#3e3e3e"/><rect x="151" y="94" width="1" height="1" fill="#3e3e3e"/><rect x="151" y="106" width="1" height="1" fill="#3e3e3e"/><rect x="151" y="118" width="1" height="1" fill="#3e3e3e"/><rect x="151" y="129" width="1" height="1" fill="#3e3e3e"/><rect x="151" y="141" width="1" height="1" fill="#3e3e3e"/><rect x="151" y="153" width="1" height="1" fill="#3e3e3e"/><rect x="151" y="165" width="1" height="1" fill="#3e3e3e"/><rect x="151" y="176" width="1" height="1" fill="#3e3e3e"/><rect x="151" y="188" width="1" height="1" fill="#3e3e3e"/><rect x="151" y="200" width="1" height="1" fill="#3e3e3e"/><rect x="151" y="212" width="1" height="1" fill="#3e3e3e"/><rect x="151" y="223" width="1" height="1" fill="#3e3e3e"/><rect x="151" y="235" width="1" height="1" fill="#3e3e3e"/><rect x="151" y="247" width="1" height="1" fill="#3e3e3e"/><rect x="151" y="259" width="1" height="1" fill="#3e3e3e"/><rect x="151" y="271" width="1" height="1" fill="#3e3e3e"/><rect x="151" y="282" width="1" height="1" fill="#3e3e3e"/><rect x="151" y="294" width="1" height="1" fill="#3e3e3e"/><rect x="151" y="306" width="1" height="1" fill="#3e3e3e"/><rect x="151" y="318" width="1" height="1" fill="#3e3e3e"/><rect x="151" y="329" width="1" height="1" fill="#3e3e3e"/><rect x="151" y="341" width="1" height="1" fill="#3e3e3e"/><rect x="151" y="353" width="1" height="1" fill="#3e3e3e"/><rect x="151" y="365" width="1" height="1" fill="#3e3e3e"/><rect x="151" y="376" width="1" height="1" fill="#3e3e3e"/><rect x="151" y="388" width="1" height="1" fill="#3e3e3e"/><rect x="151" y="400" width="1" height="1" fill="#3e3e3e"/><rect x="151" y="412" width="1" height="1" fill="#3e3e3e"/><rect x="151" y="424" width="1" height="1" fill="#3e3e3e"/><rect x="163" y="94" width="1" height="1" fill="#3e3e3e"/><rect x="163" y="106" width="1" height="1" fill="#3e3e3e"/><rect x="163" y="118" width="1" height="1" fill="#3e3e3e"/><rect x="163" y="129" width="1" height="1" fill="#3e3e3e"/><rect x="163" y="141" width="1" height="1" fill="#3e3e3e"/><rect x="163" y="153" width="1" height="1" fill="#3e3e3e"/><rect x="163" y="165" width="1" height="1" fill="#3e3e3e"/><rect x="163" y="176" width="1" height="1" fill="#3e3e3e"/><rect x="163" y="188" width="1" height="1" fill="#3e3e3e"/><rect x="163" y="200" width="1" height="1" fill="#3e3e3e"/><rect x="163" y="212" width="1" height="1" fill="#3e3e3e"/><rect x="163" y="223" width="1" height="1" fill="#3e3e3e"/><rect x="163" y="235" width="1" height="1" fill="#3e3e3e"/><rect x="163" y="247" width="1" height="1" fill="#3e3e3e"/><rect x="163" y="259" width="1" height="1" fill="#3e3e3e"/><rect x="163" y="271" width="1" height="1" fill="#3e3e3e"/><rect x="163" y="282" width="1" height="1" fill="#3e3e3e"/><rect x="163" y="294" width="1" height="1" fill="#3e3e3e"/><rect x="163" y="306" width="1" height="1" fill="#3e3e3e"/><rect x="163" y="318" width="1" height="1" fill="#3e3e3e"/><rect x="163" y="329" width="1" height="1" fill="#3e3e3e"/><rect x="163" y="341" width="1" height="1" fill="#3e3e3e"/><rect x="163" y="353" width="1" height="1" fill="#3e3e3e"/><rect x="163" y="365" width="1" height="1" fill="#3e3e3e"/><rect x="163" y="376" width="1" height="1" fill="#3e3e3e"/><rect x="163" y="388" width="1" height="1" fill="#3e3e3e"/><rect x="163" y="400" width="1" height="1" fill="#3e3e3e"/><rect x="163" y="412" width="1" height="1" fill="#3e3e3e"/><rect x="163" y="424" width="1" height="1" fill="#3e3e3e"/><rect x="175" y="94" width="1" height="1" fill="#3e3e3e"/><rect x="175" y="106" width="1" height="1" fill="#3e3e3e"/><rect x="175" y="118" width="1" height="1" fill="#3e3e3e"/><rect x="175" y="129" width="1" height="1" fill="#3e3e3e"/><rect x="175" y="141" width="1" height="1" fill="#3e3e3e"/><rect x="175" y="153" width="1" height="1" fill="#3e3e3e"/><rect x="175" y="165" width="1" height="1" fill="#3e3e3e"/><rect x="175" y="176" width="1" height="1" fill="#3e3e3e"/><rect x="175" y="188" width="1" height="1" fill="#3e3e3e"/><rect x="175" y="200" width="1" height="1" fill="#3e3e3e"/><rect x="175" y="212" width="1" height="1" fill="#3e3e3e"/><rect x="175" y="223" width="1" height="1" fill="#3e3e3e"/><rect x="175" y="235" width="1" height="1" fill="#3e3e3e"/><rect x="175" y="247" width="1" height="1" fill="#3e3e3e"/><rect x="175" y="259" width="1" height="1" fill="#3e3e3e"/><rect x="175" y="271" width="1" height="1" fill="#3e3e3e"/><rect x="175" y="282" width="1" height="1" fill="#3e3e3e"/><rect x="175" y="294" width="1" height="1" fill="#3e3e3e"/><rect x="175" y="306" width="1" height="1" fill="#3e3e3e"/><rect x="175" y="318" width="1" height="1" fill="#3e3e3e"/><rect x="175" y="329" width="1" height="1" fill="#3e3e3e"/><rect x="175" y="341" width="1" height="1" fill="#3e3e3e"/><rect x="175" y="353" width="1" height="1" fill="#3e3e3e"/><rect x="175" y="365" width="1" height="1" fill="#3e3e3e"/><rect x="175" y="376" width="1" height="1" fill="#3e3e3e"/><rect x="175" y="388" width="1" height="1" fill="#3e3e3e"/><rect x="175" y="400" width="1" height="1" fill="#3e3e3e"/><rect x="175" y="412" width="1" height="1" fill="#3e3e3e"/><rect x="175" y="424" width="1" height="1" fill="#3e3e3e"/><rect x="186" y="94" width="1" height="1" fill="#3e3e3e"/><rect x="186" y="106" width="1" height="1" fill="#3e3e3e"/><rect x="186" y="118" width="1" height="1" fill="#3e3e3e"/><rect x="186" y="129" width="1" height="1" fill="#3e3e3e"/><rect x="186" y="141" width="1" height="1" fill="#3e3e3e"/><rect x="186" y="153" width="1" height="1" fill="#3e3e3e"/><rect x="186" y="165" width="1" height="1" fill="#3e3e3e"/><rect x="186" y="176" width="1" height="1" fill="#3e3e3e"/><rect x="186" y="188" width="1" height="1" fill="#3e3e3e"/><rect x="186" y="200" width="1" height="1" fill="#3e3e3e"/><rect x="186" y="212" width="1" height="1" fill="#3e3e3e"/><rect x="186" y="223" width="1" height="1" fill="#3e3e3e"/><rect x="186" y="235" width="1" height="1" fill="#3e3e3e"/><rect x="186" y="247" width="1" height="1" fill="#3e3e3e"/><rect x="186" y="259" width="1" height="1" fill="#3e3e3e"/><rect x="186" y="271" width="1" height="1" fill="#3e3e3e"/><rect x="186" y="282" width="1" height="1" fill="#3e3e3e"/><rect x="186" y="294" width="1" height="1" fill="#3e3e3e"/><rect x="186" y="306" width="1" height="1" fill="#3e3e3e"/><rect x="186" y="318" width="1" height="1" fill="#3e3e3e"/><rect x="186" y="329" width="1" height="1" fill="#3e3e3e"/><rect x="186" y="341" width="1" height="1" fill="#3e3e3e"/><rect x="186" y="353" width="1" height="1" fill="#3e3e3e"/><rect x="186" y="365" width="1" height="1" fill="#3e3e3e"/><rect x="186" y="376" width="1" height="1" fill="#3e3e3e"/><rect x="186" y="388" width="1" height="1" fill="#3e3e3e"/><rect x="186" y="400" width="1" height="1" fill="#3e3e3e"/><rect x="186" y="412" width="1" height="1" fill="#3e3e3e"/><rect x="186" y="424" width="1" height="1" fill="#3e3e3e"/><rect x="198" y="94" width="1" height="1" fill="#3e3e3e"/><rect x="198" y="106" width="1" height="1" fill="#3e3e3e"/><rect x="198" y="118" width="1" height="1" fill="#3e3e3e"/><rect x="198" y="129" width="1" height="1" fill="#3e3e3e"/><rect x="198" y="141" width="1" height="1" fill="#3e3e3e"/><rect x="198" y="153" width="1" height="1" fill="#3e3e3e"/><rect x="198" y="165" width="1" height="1" fill="#3e3e3e"/><rect x="198" y="176" width="1" height="1" fill="#3e3e3e"/><rect x="198" y="188" width="1" height="1" fill="#3e3e3e"/><rect x="198" y="200" width="1" height="1" fill="#3e3e3e"/><rect x="198" y="212" width="1" height="1" fill="#3e3e3e"/><rect x="198" y="223" width="1" height="1" fill="#3e3e3e"/><rect x="198" y="235" width="1" height="1" fill="#3e3e3e"/><rect x="198" y="247" width="1" height="1" fill="#3e3e3e"/><rect x="198" y="259" width="1" height="1" fill="#3e3e3e"/><rect x="198" y="271" width="1" height="1" fill="#3e3e3e"/><rect x="198" y="282" width="1" height="1" fill="#3e3e3e"/><rect x="198" y="294" width="1" height="1" fill="#3e3e3e"/><rect x="198" y="306" width="1" height="1" fill="#3e3e3e"/><rect x="198" y="318" width="1" height="1" fill="#3e3e3e"/><rect x="198" y="329" width="1" height="1" fill="#3e3e3e"/><rect x="198" y="341" width="1" height="1" fill="#3e3e3e"/><rect x="198" y="353" width="1" height="1" fill="#3e3e3e"/><rect x="198" y="365" width="1" height="1" fill="#3e3e3e"/><rect x="198" y="376" width="1" height="1" fill="#3e3e3e"/><rect x="198" y="388" width="1" height="1" fill="#3e3e3e"/><rect x="198" y="400" width="1" height="1" fill="#3e3e3e"/><rect x="198" y="412" width="1" height="1" fill="#3e3e3e"/><rect x="198" y="424" width="1" height="1" fill="#3e3e3e"/><rect x="210" y="94" width="1" height="1" fill="#3e3e3e"/><rect x="210" y="106" width="1" height="1" fill="#3e3e3e"/><rect x="210" y="118" width="1" height="1" fill="#3e3e3e"/><rect x="210" y="129" width="1" height="1" fill="#3e3e3e"/><rect x="210" y="141" width="1" height="1" fill="#3e3e3e"/><rect x="210" y="153" width="1" height="1" fill="#3e3e3e"/><rect x="210" y="165" width="1" height="1" fill="#3e3e3e"/><rect x="210" y="176" width="1" height="1" fill="#3e3e3e"/><rect x="210" y="188" width="1" height="1" fill="#3e3e3e"/><rect x="210" y="200" width="1" height="1" fill="#3e3e3e"/><rect x="210" y="212" width="1" height="1" fill="#3e3e3e"/><rect x="210" y="223" width="1" height="1" fill="#3e3e3e"/><rect x="210" y="235" width="1" height="1" fill="#3e3e3e"/><rect x="210" y="247" width="1" height="1" fill="#3e3e3e"/><rect x="210" y="259" width="1" height="1" fill="#3e3e3e"/><rect x="210" y="271" width="1" height="1" fill="#3e3e3e"/><rect x="210" y="282" width="1" height="1" fill="#3e3e3e"/><rect x="210" y="294" width="1" height="1" fill="#3e3e3e"/><rect x="210" y="306" width="1" height="1" fill="#3e3e3e"/><rect x="210" y="318" width="1" height="1" fill="#3e3e3e"/><rect x="210" y="329" width="1" height="1" fill="#3e3e3e"/><rect x="210" y="341" width="1" height="1" fill="#3e3e3e"/><rect x="210" y="353" width="1" height="1" fill="#3e3e3e"/><rect x="210" y="365" width="1" height="1" fill="#3e3e3e"/><rect x="210" y="376" width="1" height="1" fill="#3e3e3e"/><rect x="210" y="388" width="1" height="1" fill="#3e3e3e"/><rect x="210" y="400" width="1" height="1" fill="#3e3e3e"/><rect x="210" y="412" width="1" height="1" fill="#3e3e3e"/><rect x="210" y="424" width="1" height="1" fill="#3e3e3e"/><rect x="222" y="94" width="1" height="1" fill="#3e3e3e"/><rect x="222" y="106" width="1" height="1" fill="#3e3e3e"/><rect x="222" y="118" width="1" height="1" fill="#3e3e3e"/><rect x="222" y="129" width="1" height="1" fill="#3e3e3e"/><rect x="222" y="141" width="1" height="1" fill="#3e3e3e"/><rect x="222" y="153" width="1" height="1" fill="#3e3e3e"/><rect x="222" y="165" width="1" height="1" fill="#3e3e3e"/><rect x="222" y="176" width="1" height="1" fill="#3e3e3e"/><rect x="222" y="188" width="1" height="1" fill="#3e3e3e"/><rect x="222" y="200" width="1" height="1" fill="#3e3e3e"/><rect x="222" y="212" width="1" height="1" fill="#3e3e3e"/><rect x="222" y="223" width="1" height="1" fill="#3e3e3e"/><rect x="222" y="235" width="1" height="1" fill="#3e3e3e"/><rect x="222" y="247" width="1" height="1" fill="#3e3e3e"/><rect x="222" y="259" width="1" height="1" fill="#3e3e3e"/><rect x="222" y="271" width="1" height="1" fill="#3e3e3e"/><rect x="222" y="282" width="1" height="1" fill="#3e3e3e"/><rect x="222" y="294" width="1" height="1" fill="#3e3e3e"/><rect x="222" y="306" width="1" height="1" fill="#3e3e3e"/><rect x="222" y="318" width="1" height="1" fill="#3e3e3e"/><rect x="222" y="329" width="1" height="1" fill="#3e3e3e"/><rect x="222" y="341" width="1" height="1" fill="#3e3e3e"/><rect x="222" y="353" width="1" height="1" fill="#3e3e3e"/><rect x="222" y="365" width="1" height="1" fill="#3e3e3e"/><rect x="222" y="376" width="1" height="1" fill="#3e3e3e"/><rect x="222" y="388" width="1" height="1" fill="#3e3e3e"/><rect x="222" y="400" width="1" height="1" fill="#3e3e3e"/><rect x="222" y="412" width="1" height="1" fill="#3e3e3e"/><rect x="222" y="424" width="1" height="1" fill="#3e3e3e"/><rect x="234" y="94" width="1" height="1" fill="#3e3e3e"/><rect x="234" y="106" width="1" height="1" fill="#3e3e3e"/><rect x="234" y="118" width="1" height="1" fill="#3e3e3e"/><rect x="234" y="129" width="1" height="1" fill="#3e3e3e"/><rect x="234" y="141" width="1" height="1" fill="#3e3e3e"/><rect x="234" y="153" width="1" height="1" fill="#3e3e3e"/><rect x="234" y="165" width="1" height="1" fill="#3e3e3e"/><rect x="234" y="176" width="1" height="1" fill="#3e3e3e"/><rect x="234" y="188" width="1" height="1" fill="#3e3e3e"/><rect x="234" y="200" width="1" height="1" fill="#3e3e3e"/><rect x="234" y="212" width="1" height="1" fill="#3e3e3e"/><rect x="234" y="223" width="1" height="1" fill="#3e3e3e"/><rect x="234" y="235" width="1" height="1" fill="#3e3e3e"/><rect x="234" y="247" width="1" height="1" fill="#3e3e3e"/><rect x="234" y="259" width="1" height="1" fill="#3e3e3e"/><rect x="234" y="271" width="1" height="1" fill="#3e3e3e"/><rect x="234" y="282" width="1" height="1" fill="#3e3e3e"/><rect x="234" y="294" width="1" height="1" fill="#3e3e3e"/><rect x="234" y="306" width="1" height="1" fill="#3e3e3e"/><rect x="234" y="318" width="1" height="1" fill="#3e3e3e"/><rect x="234" y="329" width="1" height="1" fill="#3e3e3e"/><rect x="234" y="341" width="1" height="1" fill="#3e3e3e"/><rect x="234" y="353" width="1" height="1" fill="#3e3e3e"/><rect x="234" y="365" width="1" height="1" fill="#3e3e3e"/><rect x="234" y="376" width="1" height="1" fill="#3e3e3e"/><rect x="234" y="388" width="1" height="1" fill="#3e3e3e"/><rect x="234" y="400" width="1" height="1" fill="#3e3e3e"/><rect x="234" y="412" width="1" height="1" fill="#3e3e3e"/><rect x="234" y="424" width="1" height="1" fill="#3e3e3e"/><rect x="245" y="94" width="1" height="1" fill="#3e3e3e"/><rect x="245" y="106" width="1" height="1" fill="#3e3e3e"/><rect x="245" y="118" width="1" height="1" fill="#3e3e3e"/><rect x="245" y="129" width="1" height="1" fill="#3e3e3e"/><rect x="245" y="141" width="1" height="1" fill="#3e3e3e"/><rect x="245" y="153" width="1" height="1" fill="#3e3e3e"/><rect x="245" y="165" width="1" height="1" fill="#3e3e3e"/><rect x="245" y="176" width="1" height="1" fill="#3e3e3e"/><rect x="245" y="188" width="1" height="1" fill="#3e3e3e"/><rect x="245" y="200" width="1" height="1" fill="#3e3e3e"/><rect x="245" y="212" width="1" height="1" fill="#3e3e3e"/><rect x="245" y="223" width="1" height="1" fill="#3e3e3e"/><rect x="245" y="235" width="1" height="1" fill="#3e3e3e"/><rect x="245" y="247" width="1" height="1" fill="#3e3e3e"/><rect x="245" y="259" width="1" height="1" fill="#3e3e3e"/><rect x="245" y="271" width="1" height="1" fill="#3e3e3e"/><rect x="245" y="282" width="1" height="1" fill="#3e3e3e"/><rect x="245" y="294" width="1" height="1" fill="#3e3e3e"/><rect x="245" y="306" width="1" height="1" fill="#3e3e3e"/><rect x="245" y="318" width="1" height="1" fill="#3e3e3e"/><rect x="245" y="329" width="1" height="1" fill="#3e3e3e"/><rect x="245" y="341" width="1" height="1" fill="#3e3e3e"/><rect x="245" y="353" width="1" height="1" fill="#3e3e3e"/><rect x="245" y="365" width="1" height="1" fill="#3e3e3e"/><rect x="245" y="376" width="1" height="1" fill="#3e3e3e"/><rect x="245" y="388" width="1" height="1" fill="#3e3e3e"/><rect x="245" y="400" width="1" height="1" fill="#3e3e3e"/><rect x="245" y="412" width="1" height="1" fill="#3e3e3e"/><rect x="245" y="424" width="1" height="1" fill="#3e3e3e"/><rect x="257" y="94" width="1" height="1" fill="#3e3e3e"/><rect x="257" y="106" width="1" height="1" fill="#3e3e3e"/><rect x="257" y="118" width="1" height="1" fill="#3e3e3e"/><rect x="257" y="129" width="1" height="1" fill="#3e3e3e"/><rect x="257" y="141" width="1" height="1" fill="#3e3e3e"/><rect x="257" y="153" width="1" height="1" fill="#3e3e3e"/><rect x="257" y="165" width="1" height="1" fill="#3e3e3e"/><rect x="257" y="176" width="1" height="1" fill="#3e3e3e"/><rect x="257" y="188" width="1" height="1" fill="#3e3e3e"/><rect x="257" y="200" width="1" height="1" fill="#3e3e3e"/><rect x="257" y="212" width="1" height="1" fill="#3e3e3e"/><rect x="257" y="223" width="1" height="1" fill="#3e3e3e"/><rect x="257" y="235" width="1" height="1" fill="#3e3e3e"/><rect x="257" y="247" width="1" height="1" fill="#3e3e3e"/><rect x="257" y="259" width="1" height="1" fill="#3e3e3e"/><rect x="257" y="271" width="1" height="1" fill="#3e3e3e"/><rect x="257" y="282" width="1" height="1" fill="#3e3e3e"/><rect x="257" y="294" width="1" height="1" fill="#3e3e3e"/><rect x="257" y="306" width="1" height="1" fill="#3e3e3e"/><rect x="257" y="318" width="1" height="1" fill="#3e3e3e"/><rect x="257" y="329" width="1" height="1" fill="#3e3e3e"/><rect x="257" y="341" width="1" height="1" fill="#3e3e3e"/><rect x="257" y="353" width="1" height="1" fill="#3e3e3e"/><rect x="257" y="365" width="1" height="1" fill="#3e3e3e"/><rect x="257" y="376" width="1" height="1" fill="#3e3e3e"/><rect x="257" y="388" width="1" height="1" fill="#3e3e3e"/><rect x="257" y="400" width="1" height="1" fill="#3e3e3e"/><rect x="257" y="412" width="1" height="1" fill="#3e3e3e"/><rect x="257" y="424" width="1" height="1" fill="#3e3e3e"/><rect x="269" y="94" width="1" height="1" fill="#3e3e3e"/><rect x="269" y="106" width="1" height="1" fill="#3e3e3e"/><rect x="269" y="118" width="1" height="1" fill="#3e3e3e"/><rect x="269" y="129" width="1" height="1" fill="#3e3e3e"/><rect x="269" y="141" width="1" height="1" fill="#3e3e3e"/><rect x="269" y="153" width="1" height="1" fill="#3e3e3e"/><rect x="269" y="165" width="1" height="1" fill="#3e3e3e"/><rect x="269" y="176" width="1" height="1" fill="#3e3e3e"/><rect x="269" y="188" width="1" height="1" fill="#3e3e3e"/><rect x="269" y="200" width="1" height="1" fill="#3e3e3e"/><rect x="269" y="212" width="1" height="1" fill="#3e3e3e"/><rect x="269" y="223" width="1" height="1" fill="#3e3e3e"/><rect x="269" y="235" width="1" height="1" fill="#3e3e3e"/><rect x="269" y="247" width="1" height="1" fill="#3e3e3e"/><rect x="269" y="259" width="1" height="1" fill="#3e3e3e"/><rect x="269" y="271" width="1" height="1" fill="#3e3e3e"/><rect x="269" y="282" width="1" height="1" fill="#3e3e3e"/><rect x="269" y="294" width="1" height="1" fill="#3e3e3e"/><rect x="269" y="306" width="1" height="1" fill="#3e3e3e"/><rect x="269" y="318" width="1" height="1" fill="#3e3e3e"/><rect x="269" y="329" width="1" height="1" fill="#3e3e3e"/><rect x="269" y="341" width="1" height="1" fill="#3e3e3e"/><rect x="269" y="353" width="1" height="1" fill="#3e3e3e"/><rect x="269" y="365" width="1" height="1" fill="#3e3e3e"/><rect x="269" y="376" width="1" height="1" fill="#3e3e3e"/><rect x="269" y="388" width="1" height="1" fill="#3e3e3e"/><rect x="269" y="400" width="1" height="1" fill="#3e3e3e"/><rect x="269" y="412" width="1" height="1" fill="#3e3e3e"/><rect x="269" y="424" width="1" height="1" fill="#3e3e3e"/><rect x="281" y="94" width="1" height="1" fill="#3e3e3e"/><rect x="281" y="106" width="1" height="1" fill="#3e3e3e"/><rect x="281" y="118" width="1" height="1" fill="#3e3e3e"/><rect x="281" y="129" width="1" height="1" fill="#3e3e3e"/><rect x="281" y="141" width="1" height="1" fill="#3e3e3e"/><rect x="281" y="153" width="1" height="1" fill="#3e3e3e"/><rect x="281" y="165" width="1" height="1" fill="#3e3e3e"/><rect x="281" y="176" width="1" height="1" fill="#3e3e3e"/><rect x="281" y="188" width="1" height="1" fill="#3e3e3e"/><rect x="281" y="200" width="1" height="1" fill="#3e3e3e"/><rect x="281" y="212" width="1" height="1" fill="#3e3e3e"/><rect x="281" y="223" width="1" height="1" fill="#3e3e3e"/><rect x="281" y="235" width="1" height="1" fill="#3e3e3e"/><rect x="281" y="247" width="1" height="1" fill="#3e3e3e"/><rect x="281" y="259" width="1" height="1" fill="#3e3e3e"/><rect x="281" y="271" width="1" height="1" fill="#3e3e3e"/><rect x="281" y="282" width="1" height="1" fill="#3e3e3e"/><rect x="281" y="294" width="1" height="1" fill="#3e3e3e"/><rect x="281" y="306" width="1" height="1" fill="#3e3e3e"/><rect x="281" y="318" width="1" height="1" fill="#3e3e3e"/><rect x="281" y="329" width="1" height="1" fill="#3e3e3e"/><rect x="281" y="341" width="1" height="1" fill="#3e3e3e"/><rect x="281" y="353" width="1" height="1" fill="#3e3e3e"/><rect x="281" y="365" width="1" height="1" fill="#3e3e3e"/><rect x="281" y="376" width="1" height="1" fill="#3e3e3e"/><rect x="281" y="388" width="1" height="1" fill="#3e3e3e"/><rect x="281" y="400" width="1" height="1" fill="#3e3e3e"/><rect x="281" y="412" width="1" height="1" fill="#3e3e3e"/><rect x="281" y="424" width="1" height="1" fill="#3e3e3e"/><rect x="292" y="94" width="1" height="1" fill="#3e3e3e"/><rect x="292" y="106" width="1" height="1" fill="#3e3e3e"/><rect x="292" y="118" width="1" height="1" fill="#3e3e3e"/><rect x="292" y="129" width="1" height="1" fill="#3e3e3e"/><rect x="292" y="141" width="1" height="1" fill="#3e3e3e"/><rect x="292" y="153" width="1" height="1" fill="#3e3e3e"/><rect x="292" y="165" width="1" height="1" fill="#3e3e3e"/><rect x="292" y="176" width="1" height="1" fill="#3e3e3e"/><rect x="292" y="188" width="1" height="1" fill="#3e3e3e"/><rect x="292" y="200" width="1" height="1" fill="#3e3e3e"/><rect x="292" y="212" width="1" height="1" fill="#3e3e3e"/><rect x="292" y="223" width="1" height="1" fill="#3e3e3e"/><rect x="292" y="235" width="1" height="1" fill="#3e3e3e"/><rect x="292" y="247" width="1" height="1" fill="#3e3e3e"/><rect x="292" y="259" width="1" height="1" fill="#3e3e3e"/><rect x="292" y="271" width="1" height="1" fill="#3e3e3e"/><rect x="292" y="282" width="1" height="1" fill="#3e3e3e"/><rect x="292" y="294" width="1" height="1" fill="#3e3e3e"/><rect x="292" y="306" width="1" height="1" fill="#3e3e3e"/><rect x="292" y="318" width="1" height="1" fill="#3e3e3e"/><rect x="292" y="329" width="1" height="1" fill="#3e3e3e"/><rect x="292" y="341" width="1" height="1" fill="#3e3e3e"/><rect x="292" y="353" width="1" height="1" fill="#3e3e3e"/><rect x="292" y="365" width="1" height="1" fill="#3e3e3e"/><rect x="292" y="376" width="1" height="1" fill="#3e3e3e"/><rect x="292" y="388" width="1" height="1" fill="#3e3e3e"/><rect x="292" y="400" width="1" height="1" fill="#3e3e3e"/><rect x="292" y="412" width="1" height="1" fill="#3e3e3e"/><rect x="292" y="424" width="1" height="1" fill="#3e3e3e"/><rect x="304" y="94" width="1" height="1" fill="#3e3e3e"/><rect x="304" y="106" width="1" height="1" fill="#3e3e3e"/><rect x="304" y="118" width="1" height="1" fill="#3e3e3e"/><rect x="304" y="129" width="1" height="1" fill="#3e3e3e"/><rect x="304" y="141" width="1" height="1" fill="#3e3e3e"/><rect x="304" y="153" width="1" height="1" fill="#3e3e3e"/><rect x="304" y="165" width="1" height="1" fill="#3e3e3e"/><rect x="304" y="176" width="1" height="1" fill="#3e3e3e"/><rect x="304" y="188" width="1" height="1" fill="#3e3e3e"/><rect x="304" y="200" width="1" height="1" fill="#3e3e3e"/><rect x="304" y="212" width="1" height="1" fill="#3e3e3e"/><rect x="304" y="223" width="1" height="1" fill="#3e3e3e"/><rect x="304" y="235" width="1" height="1" fill="#3e3e3e"/><rect x="304" y="247" width="1" height="1" fill="#3e3e3e"/><rect x="304" y="259" width="1" height="1" fill="#3e3e3e"/><rect x="304" y="271" width="1" height="1" fill="#3e3e3e"/><rect x="304" y="282" width="1" height="1" fill="#3e3e3e"/><rect x="304" y="294" width="1" height="1" fill="#3e3e3e"/><rect x="304" y="306" width="1" height="1" fill="#3e3e3e"/><rect x="304" y="318" width="1" height="1" fill="#3e3e3e"/><rect x="304" y="329" width="1" height="1" fill="#3e3e3e"/><rect x="304" y="341" width="1" height="1" fill="#3e3e3e"/><rect x="304" y="353" width="1" height="1" fill="#3e3e3e"/><rect x="304" y="365" width="1" height="1" fill="#3e3e3e"/><rect x="304" y="376" width="1" height="1" fill="#3e3e3e"/><rect x="304" y="388" width="1" height="1" fill="#3e3e3e"/><rect x="304" y="400" width="1" height="1" fill="#3e3e3e"/><rect x="304" y="412" width="1" height="1" fill="#3e3e3e"/><rect x="304" y="424" width="1" height="1" fill="#3e3e3e"/><rect x="316" y="94" width="1" height="1" fill="#3e3e3e"/><rect x="316" y="106" width="1" height="1" fill="#3e3e3e"/><rect x="316" y="118" width="1" height="1" fill="#3e3e3e"/><rect x="316" y="129" width="1" height="1" fill="#3e3e3e"/><rect x="316" y="141" width="1" height="1" fill="#3e3e3e"/><rect x="316" y="153" width="1" height="1" fill="#3e3e3e"/><rect x="316" y="165" width="1" height="1" fill="#3e3e3e"/><rect x="316" y="176" width="1" height="1" fill="#3e3e3e"/><rect x="316" y="188" width="1" height="1" fill="#3e3e3e"/><rect x="316" y="200" width="1" height="1" fill="#3e3e3e"/><rect x="316" y="212" width="1" height="1" fill="#3e3e3e"/><rect x="316" y="223" width="1" height="1" fill="#3e3e3e"/><rect x="316" y="235" width="1" height="1" fill="#3e3e3e"/><rect x="316" y="247" width="1" height="1" fill="#3e3e3e"/><rect x="316" y="259" width="1" height="1" fill="#3e3e3e"/><rect x="316" y="271" width="1" height="1" fill="#3e3e3e"/><rect x="316" y="282" width="1" height="1" fill="#3e3e3e"/><rect x="316" y="294" width="1" height="1" fill="#3e3e3e"/><rect x="316" y="306" width="1" height="1" fill="#3e3e3e"/><rect x="316" y="318" width="1" height="1" fill="#3e3e3e"/><rect x="316" y="329" width="1" height="1" fill="#3e3e3e"/><rect x="316" y="341" width="1" height="1" fill="#3e3e3e"/><rect x="316" y="353" width="1" height="1" fill="#3e3e3e"/><rect x="316" y="365" width="1" height="1" fill="#3e3e3e"/><rect x="316" y="376" width="1" height="1" fill="#3e3e3e"/><rect x="316" y="388" width="1" height="1" fill="#3e3e3e"/><rect x="316" y="400" width="1" height="1" fill="#3e3e3e"/><rect x="316" y="412" width="1" height="1" fill="#3e3e3e"/><rect x="316" y="424" width="1" height="1" fill="#3e3e3e"/><rect x="328" y="94" width="1" height="1" fill="#3e3e3e"/><rect x="328" y="106" width="1" height="1" fill="#3e3e3e"/><rect x="328" y="118" width="1" height="1" fill="#3e3e3e"/><rect x="328" y="129" width="1" height="1" fill="#3e3e3e"/><rect x="328" y="141" width="1" height="1" fill="#3e3e3e"/><rect x="328" y="153" width="1" height="1" fill="#3e3e3e"/><rect x="328" y="165" width="1" height="1" fill="#3e3e3e"/><rect x="328" y="176" width="1" height="1" fill="#3e3e3e"/><rect x="328" y="188" width="1" height="1" fill="#3e3e3e"/><rect x="328" y="200" width="1" height="1" fill="#3e3e3e"/><rect x="328" y="212" width="1" height="1" fill="#3e3e3e"/><rect x="328" y="223" width="1" height="1" fill="#3e3e3e"/><rect x="328" y="235" width="1" height="1" fill="#3e3e3e"/><rect x="328" y="247" width="1" height="1" fill="#3e3e3e"/><rect x="328" y="259" width="1" height="1" fill="#3e3e3e"/><rect x="328" y="271" width="1" height="1" fill="#3e3e3e"/><rect x="328" y="282" width="1" height="1" fill="#3e3e3e"/><rect x="328" y="294" width="1" height="1" fill="#3e3e3e"/><rect x="328" y="306" width="1" height="1" fill="#3e3e3e"/><rect x="328" y="318" width="1" height="1" fill="#3e3e3e"/><rect x="328" y="329" width="1" height="1" fill="#3e3e3e"/><rect x="328" y="341" width="1" height="1" fill="#3e3e3e"/><rect x="328" y="353" width="1" height="1" fill="#3e3e3e"/><rect x="328" y="365" width="1" height="1" fill="#3e3e3e"/><rect x="328" y="376" width="1" height="1" fill="#3e3e3e"/><rect x="328" y="388" width="1" height="1" fill="#3e3e3e"/><rect x="328" y="400" width="1" height="1" fill="#3e3e3e"/><rect x="328" y="412" width="1" height="1" fill="#3e3e3e"/><rect x="328" y="424" width="1" height="1" fill="#3e3e3e"/><rect x="339" y="94" width="1" height="1" fill="#3e3e3e"/><rect x="339" y="106" width="1" height="1" fill="#3e3e3e"/><rect x="339" y="118" width="1" height="1" fill="#3e3e3e"/><rect x="339" y="129" width="1" height="1" fill="#3e3e3e"/><rect x="339" y="141" width="1" height="1" fill="#3e3e3e"/><rect x="339" y="153" width="1" height="1" fill="#3e3e3e"/><rect x="339" y="165" width="1" height="1" fill="#3e3e3e"/><rect x="339" y="176" width="1" height="1" fill="#3e3e3e"/><rect x="339" y="188" width="1" height="1" fill="#3e3e3e"/><rect x="339" y="200" width="1" height="1" fill="#3e3e3e"/><rect x="339" y="212" width="1" height="1" fill="#3e3e3e"/><rect x="339" y="223" width="1" height="1" fill="#3e3e3e"/><rect x="339" y="235" width="1" height="1" fill="#3e3e3e"/><rect x="339" y="247" width="1" height="1" fill="#3e3e3e"/><rect x="339" y="259" width="1" height="1" fill="#3e3e3e"/><rect x="339" y="271" width="1" height="1" fill="#3e3e3e"/><rect x="339" y="282" width="1" height="1" fill="#3e3e3e"/><rect x="339" y="294" width="1" height="1" fill="#3e3e3e"/><rect x="339" y="306" width="1" height="1" fill="#3e3e3e"/><rect x="339" y="318" width="1" height="1" fill="#3e3e3e"/><rect x="339" y="329" width="1" height="1" fill="#3e3e3e"/><rect x="339" y="341" width="1" height="1" fill="#3e3e3e"/><rect x="339" y="353" width="1" height="1" fill="#3e3e3e"/><rect x="339" y="365" width="1" height="1" fill="#3e3e3e"/><rect x="339" y="376" width="1" height="1" fill="#3e3e3e"/><rect x="339" y="388" width="1" height="1" fill="#3e3e3e"/><rect x="339" y="400" width="1" height="1" fill="#3e3e3e"/><rect x="339" y="412" width="1" height="1" fill="#3e3e3e"/><rect x="339" y="424" width="1" height="1" fill="#3e3e3e"/><rect x="351" y="94" width="1" height="1" fill="#3e3e3e"/><rect x="351" y="106" width="1" height="1" fill="#3e3e3e"/><rect x="351" y="118" width="1" height="1" fill="#3e3e3e"/><rect x="351" y="129" width="1" height="1" fill="#3e3e3e"/><rect x="351" y="141" width="1" height="1" fill="#3e3e3e"/><rect x="351" y="153" width="1" height="1" fill="#3e3e3e"/><rect x="351" y="165" width="1" height="1" fill="#3e3e3e"/><rect x="351" y="176" width="1" height="1" fill="#3e3e3e"/><rect x="351" y="188" width="1" height="1" fill="#3e3e3e"/><rect x="351" y="200" width="1" height="1" fill="#3e3e3e"/><rect x="351" y="212" width="1" height="1" fill="#3e3e3e"/><rect x="351" y="223" width="1" height="1" fill="#3e3e3e"/><rect x="351" y="235" width="1" height="1" fill="#3e3e3e"/><rect x="351" y="247" width="1" height="1" fill="#3e3e3e"/><rect x="351" y="259" width="1" height="1" fill="#3e3e3e"/><rect x="351" y="271" width="1" height="1" fill="#3e3e3e"/><rect x="351" y="282" width="1" height="1" fill="#3e3e3e"/><rect x="351" y="294" width="1" height="1" fill="#3e3e3e"/><rect x="351" y="306" width="1" height="1" fill="#3e3e3e"/><rect x="351" y="318" width="1" height="1" fill="#3e3e3e"/><rect x="351" y="329" width="1" height="1" fill="#3e3e3e"/><rect x="351" y="341" width="1" height="1" fill="#3e3e3e"/><rect x="351" y="353" width="1" height="1" fill="#3e3e3e"/><rect x="351" y="365" width="1" height="1" fill="#3e3e3e"/><rect x="351" y="376" width="1" height="1" fill="#3e3e3e"/><rect x="351" y="388" width="1" height="1" fill="#3e3e3e"/><rect x="351" y="400" width="1" height="1" fill="#3e3e3e"/><rect x="351" y="412" width="1" height="1" fill="#3e3e3e"/><rect x="351" y="424" width="1" height="1" fill="#3e3e3e"/><rect x="363" y="94" width="1" height="1" fill="#3e3e3e"/><rect x="363" y="106" width="1" height="1" fill="#3e3e3e"/><rect x="363" y="118" width="1" height="1" fill="#3e3e3e"/><rect x="363" y="129" width="1" height="1" fill="#3e3e3e"/><rect x="363" y="141" width="1" height="1" fill="#3e3e3e"/><rect x="363" y="153" width="1" height="1" fill="#3e3e3e"/><rect x="363" y="165" width="1" height="1" fill="#3e3e3e"/><rect x="363" y="176" width="1" height="1" fill="#3e3e3e"/><rect x="363" y="188" width="1" height="1" fill="#3e3e3e"/><rect x="363" y="200" width="1" height="1" fill="#3e3e3e"/><rect x="363" y="212" width="1" height="1" fill="#3e3e3e"/><rect x="363" y="223" width="1" height="1" fill="#3e3e3e"/><rect x="363" y="235" width="1" height="1" fill="#3e3e3e"/><rect x="363" y="247" width="1" height="1" fill="#3e3e3e"/><rect x="363" y="259" width="1" height="1" fill="#3e3e3e"/><rect x="363" y="271" width="1" height="1" fill="#3e3e3e"/><rect x="363" y="282" width="1" height="1" fill="#3e3e3e"/><rect x="363" y="294" width="1" height="1" fill="#3e3e3e"/><rect x="363" y="306" width="1" height="1" fill="#3e3e3e"/><rect x="363" y="318" width="1" height="1" fill="#3e3e3e"/><rect x="363" y="329" width="1" height="1" fill="#3e3e3e"/><rect x="363" y="341" width="1" height="1" fill="#3e3e3e"/><rect x="363" y="353" width="1" height="1" fill="#3e3e3e"/><rect x="363" y="365" width="1" height="1" fill="#3e3e3e"/><rect x="363" y="376" width="1" height="1" fill="#3e3e3e"/><rect x="363" y="388" width="1" height="1" fill="#3e3e3e"/><rect x="363" y="400" width="1" height="1" fill="#3e3e3e"/><rect x="363" y="412" width="1" height="1" fill="#3e3e3e"/><rect x="363" y="424" width="1" height="1" fill="#3e3e3e"/><rect x="375" y="94" width="1" height="1" fill="#3e3e3e"/><rect x="375" y="106" width="1" height="1" fill="#3e3e3e"/><rect x="375" y="118" width="1" height="1" fill="#3e3e3e"/><rect x="375" y="129" width="1" height="1" fill="#3e3e3e"/><rect x="375" y="141" width="1" height="1" fill="#3e3e3e"/><rect x="375" y="153" width="1" height="1" fill="#3e3e3e"/><rect x="375" y="165" width="1" height="1" fill="#3e3e3e"/><rect x="375" y="176" width="1" height="1" fill="#3e3e3e"/><rect x="375" y="188" width="1" height="1" fill="#3e3e3e"/><rect x="375" y="200" width="1" height="1" fill="#3e3e3e"/><rect x="375" y="212" width="1" height="1" fill="#3e3e3e"/><rect x="375" y="223" width="1" height="1" fill="#3e3e3e"/><rect x="375" y="235" width="1" height="1" fill="#3e3e3e"/><rect x="375" y="247" width="1" height="1" fill="#3e3e3e"/><rect x="375" y="259" width="1" height="1" fill="#3e3e3e"/><rect x="375" y="271" width="1" height="1" fill="#3e3e3e"/><rect x="375" y="282" width="1" height="1" fill="#3e3e3e"/><rect x="375" y="294" width="1" height="1" fill="#3e3e3e"/><rect x="375" y="306" width="1" height="1" fill="#3e3e3e"/><rect x="375" y="318" width="1" height="1" fill="#3e3e3e"/><rect x="375" y="329" width="1" height="1" fill="#3e3e3e"/><rect x="375" y="341" width="1" height="1" fill="#3e3e3e"/><rect x="375" y="353" width="1" height="1" fill="#3e3e3e"/><rect x="375" y="365" width="1" height="1" fill="#3e3e3e"/><rect x="375" y="376" width="1" height="1" fill="#3e3e3e"/><rect x="375" y="388" width="1" height="1" fill="#3e3e3e"/><rect x="375" y="400" width="1" height="1" fill="#3e3e3e"/><rect x="375" y="412" width="1" height="1" fill="#3e3e3e"/><rect x="375" y="424" width="1" height="1" fill="#3e3e3e"/><circle cx="212" cy="248" r="100.5" fill="none" stroke="#c4c4c4" stroke-width="1.2"/><circle cx="193.3" cy="212.5" r="52.6" fill="none" stroke="#c4c4c4" stroke-width="1.2"/><circle cx="195" cy="183" r="17" fill="none" stroke="#c4c4c4" stroke-width="1.2"/><rect x="210" y="233" width="1" height="30" fill="#d80000"/><rect x="196" y="247" width="29" height="1" fill="#e00000"/><circle cx="195.5" cy="181.5" r="3.9" fill="none" stroke="#e00000" stroke-width="1.3"/><rect x="195" y="178" width="1" height="7" fill="#e00000"/><rect x="192" y="181" width="7" height="1" fill="#e00000"/></g><path d="M12.5,44.5 H19.5 L21.2,46.3 V58 H12.5 Z" fill="#fff" stroke="#6e5a5e" stroke-width="1"/><rect x="13" y="45" width="6" height="12.5" fill="#00f07a"/><rect x="19.1" y="50.6" width="6" height="2.2" fill="#000"/><rect x="21" y="48.8" width="2.2" height="5.8" fill="#000"/><path d="M35.0,44.5 H42.0 L43.7,46.3 V58 H35.0 Z" fill="#fff" stroke="#6e5a5e" stroke-width="1"/><rect x="35.5" y="45" width="6" height="12.5" fill="#00f07a"/><rect x="35.5" y="53.8" width="6" height="3.7" fill="#0b9a48"/><rect x="41.6" y="50.6" width="6" height="2.2" fill="#000"/><rect x="43.5" y="48.8" width="2.2" height="5.8" fill="#000"/><path d="M57.3,56.3 V46.5 H62 L63,47.6 H66.9 V50.6 L61,50.8 Z" fill="#00f07a" stroke="#0d5a2e" stroke-width="0.9"/><path d="M57.3,56.4 L61,50.9 H70.8 L66,56.4 Z" fill="#fafafa" stroke="#555" stroke-width="1"/><path d="M79.9,44.9 H92.4 V57.2 H80.8 L79.9,56.3 Z" fill="#fff" stroke="#6a6a6a" stroke-width="1.2"/><rect x="82.2" y="44.6" width="8" height="6" rx="1" fill="#00f07a" stroke="#0b8a40" stroke-width="0.8"/><rect x="82.9" y="53.2" width="6.5" height="4.2" rx="0.8" fill="#00f07a" stroke="#0b8a40" stroke-width="0.8"/><rect x="83.4" y="54" width="2.2" height="3" fill="#0b8a40"/><path d="M102.4,44.9 H114.9 V57.2 H103.3 L102.4,56.3 Z" fill="#fff" stroke="#6a6a6a" stroke-width="1.2"/><rect x="104.7" y="44.6" width="8" height="6" rx="1" fill="#00f07a" stroke="#0b8a40" stroke-width="0.8"/><rect x="105.4" y="53.2" width="6.5" height="4.2" rx="0.8" fill="#00f07a" stroke="#0b8a40" stroke-width="0.8"/><rect x="105.9" y="54" width="2.2" height="3" fill="#0b8a40"/><path d="M106.3,47.3 L112.6,54.5" stroke="#111" stroke-width="1.3"/><path d="M107.3,47.6 L112.8,53" stroke="#777" stroke-width="0.8"/><path d="M124.9,44.9 H137.4 V57.2 H125.8 L124.9,56.3 Z" fill="#fff" stroke="#8a8a8a" stroke-width="1.2"/><rect x="127.2" y="44.6" width="8" height="6" rx="1" fill="#bdbdbd" stroke="#8a8a8a" stroke-width="0.8"/><rect x="127.9" y="53.2" width="6.5" height="4.2" rx="0.8" fill="#bdbdbd" stroke="#8a8a8a" stroke-width="0.8"/><rect x="128.4" y="54" width="2.2" height="3" fill="#8a8a8a"/><rect x="150.3" y="44.3" width="6.2" height="5.5" rx="0.8" fill="#00f07a" stroke="#0b6a35" stroke-width="0.8"/><rect x="147" y="49.3" width="13" height="6.4" fill="#000"/><rect x="149.8" y="50.3" width="7.6" height="3" fill="#fff"/><path d="M149.6,54.3 H157.6 L158.3,57.5 H148.8 Z" fill="#00f07a" stroke="#0b6a35" stroke-width="0.7"/><path d="M169.5,44.5 H176.5 L178.5,46.5 V58 H169.5 Z" fill="#00f07a" stroke="#6e5a5e" stroke-width="1"/><rect x="176.6" y="48" width="2.6" height="3.4" fill="#00f07a" stroke="#0b6a35" stroke-width="0.6"/><rect x="174.2" y="51.2" width="7.8" height="4.6" fill="#000"/><rect x="175.8" y="52" width="4.6" height="1.6" fill="#fff"/><rect x="176" y="54.3" width="4.4" height="1.5" fill="#00f07a"/><path d="M204.4,46.4 V53.3 L206.3,52.3 L208.2,56.4 L206.6,51.6 L209.2,51.4 Z" fill="#fff" stroke="#8a8a8a" stroke-width="1.1" stroke-linejoin="round"/><path d="M232.6,44.4 H239.1 L240.6,45.9 V57.3 H232.6 Z" fill="#00f07a" stroke="#6e5a5e" stroke-width="1"/><path d="M226.7,45.4 H232.6 V58.2 H226.7 Z" fill="#00f07a" stroke="#6e5a5e" stroke-width="1"/><rect x="238.29999999999998" y="45.5" width="1.6" height="11.5" fill="#fff"/><path d="M230,51.4 L233.7,49 L237.5,51.4 L233.7,53.8 Z" fill="#fff" stroke="#111" stroke-width="0.9"/><path d="M256,44.4 H262.1 L263.6,45.9 V57.3 H256 Z" fill="#00f07a" stroke="#6e5a5e" stroke-width="1"/><path d="M249.5,45.4 H256 V58.2 H249.5 Z" fill="#00f07a" stroke="#6e5a5e" stroke-width="1"/><rect x="261.3" y="45.5" width="1.6" height="11.5" fill="#fff"/><path d="M252,51.4 L255.8,48.8 L259.6,51.4 L255.8,54 Z" fill="#fff" stroke="#111" stroke-width="0.9"/><rect x="276.5" y="44.8" width="9" height="12.8" rx="2" fill="none" stroke="#444" stroke-width="1.4" stroke-dasharray="2.2,1.6"/><rect x="283.5" y="48.5" width="4" height="9.6" fill="#f0f0f0"/><path d="M285.3,49 L286.6,51.2 L285.9,52 V55.2 H284.7 V52 L284,51.2 Z" fill="#777"/><ellipse cx="285.5" cy="56.3" rx="2.4" ry="1.3" fill="#333"/><path d="M305.8,44.4 H311.1 L312.6,45.9 V57.3 H305.8 Z" fill="#00f07a" stroke="#6e5a5e" stroke-width="1"/><path d="M298.3,45.4 H305.8 V58.2 H298.3 Z" fill="#00f07a" stroke="#6e5a5e" stroke-width="1"/><rect x="310.3" y="45.5" width="1.6" height="11.5" fill="#fff"/><path d="M327.6,44.4 H333.4 L334.9,45.9 V57.3 H327.6 Z" fill="#00f07a" stroke="#6e5a5e" stroke-width="1"/><path d="M320.6,45.4 H327.6 V58.2 H320.6 Z" fill="#00f07a" stroke="#6e5a5e" stroke-width="1"/><rect x="332.59999999999997" y="45.5" width="1.6" height="11.5" fill="#fff"/><rect x="326" y="50.8" width="5.8" height="2.2" fill="#000"/><rect x="327.8" y="49.2" width="2.2" height="5.4" fill="#000"/><rect x="354.75" y="45.5" width="1.3" height="13" fill="#2a2a2a"/><rect x="358.65000000000003" y="45.5" width="1.3" height="13" fill="#2a2a2a"/><rect x="362.65000000000003" y="45.5" width="1.3" height="13" fill="#2a2a2a"/><rect x="352.7" y="47.75" width="13.4" height="1.3" fill="#2a2a2a"/><rect x="352.7" y="51.65" width="13.4" height="1.3" fill="#2a2a2a"/><rect x="352.7" y="55.45" width="13.4" height="1.3" fill="#2a2a2a"/><path d="M375.9,44.1 V52.5" stroke="#333" stroke-width="1.5" stroke-dasharray="2.8,1.6"/><path d="M379,56.6 H388.6" stroke="#222" stroke-width="1.3" stroke-dasharray="3,2"/><circle cx="375.9" cy="56.6" r="1.6" fill="#000"/><path d="M379.3,53.3 L387,45.3" stroke="#8a7a80" stroke-width="3"/><path d="M379.6,53 L386.8,45.5" stroke="#2ad07a" stroke-width="1.8"/><path d="M378.2,54.6 L379.8,53" stroke="#000" stroke-width="1.5"/><path d="M403,52.6 L411,44.8" stroke="#8a7a80" stroke-width="3"/><path d="M403.3,52.3 L410.8,45" stroke="#2ad07a" stroke-width="1.8"/><path d="M401.8,54 L403.4,52.4" stroke="#000" stroke-width="1.5"/><path d="M409.6,50.5 A4.2,4.2 0 1 1 406.3,54.5" fill="none" stroke="#555" stroke-width="1.2"/><circle cx="409.9" cy="50.3" r="1" fill="#000"/><polygon points="430.60,44.00 428.80,47.24 432.40,47.24" fill="#14b04a" stroke="#0b5a2a" stroke-width="0.7"/><polygon points="423.20,51.30 426.44,49.50 426.44,53.10" fill="#14b04a" stroke="#0b5a2a" stroke-width="0.7"/><polygon points="438.10,51.30 434.86,49.50 434.86,53.10" fill="#14b04a" stroke="#0b5a2a" stroke-width="0.7"/><polygon points="430.60,58.60 428.80,55.36 432.40,55.36" fill="#14b04a" stroke="#0b5a2a" stroke-width="0.7"/><circle cx="430.6" cy="51.1" r="2.3" fill="#fff" stroke="#3a3a3a" stroke-width="1.2"/><path d="M432.20000000000005,52.7 L435.6,56.2" stroke="#000" stroke-width="1.6"/><polygon points="453.00,47.10 451.20,43.86 454.80,43.86" fill="#14b04a" stroke="#0b5a2a" stroke-width="0.7"/><polygon points="448.80,51.30 445.56,49.50 445.56,53.10" fill="#14b04a" stroke="#0b5a2a" stroke-width="0.7"/><polygon points="457.40,51.30 460.64,49.50 460.64,53.10" fill="#14b04a" stroke="#0b5a2a" stroke-width="0.7"/><polygon points="453.00,55.50 451.20,58.74 454.80,58.74" fill="#14b04a" stroke="#0b5a2a" stroke-width="0.7"/><circle cx="453.1" cy="51.1" r="2.3" fill="#fff" stroke="#3a3a3a" stroke-width="1.2"/><path d="M454.70000000000005,52.7 L458,56.4" stroke="#000" stroke-width="1.6"/><path d="M470,45.8 L481,56.6 M481,45.8 L470,56.6" stroke="#555" stroke-width="0.9" stroke-dasharray="1.2,0.8"/><polygon points="468.3,44.3 472.3,45.3 469.3,48.3" fill="#14b04a" stroke="#0b5a2a" stroke-width="0.7"/><polygon points="482.6,44.3 478.6,45.3 481.6,48.3" fill="#14b04a" stroke="#0b5a2a" stroke-width="0.7"/><polygon points="468.3,58.3 472.3,57.3 469.3,54.3" fill="#14b04a" stroke="#0b5a2a" stroke-width="0.7"/><circle cx="475.4" cy="51.2" r="2.3" fill="#fff" stroke="#3a3a3a" stroke-width="1.2"/><path d="M477.0,52.800000000000004 L480.5,56.4" stroke="#000" stroke-width="1.6"/><path d="M492.6,55 A3.8,3.8 0 0 1 499.8,57.5" fill="none" stroke="#555" stroke-width="1.1"/><circle cx="492.6" cy="55" r="1.1" fill="#000"/><circle cx="499.1" cy="47.3" r="2.3" fill="#fff" stroke="#3a3a3a" stroke-width="1.2"/><path d="M500.70000000000005,48.9 L504.2,52.4" stroke="#000" stroke-width="1.6"/><rect x="513" y="46.5" width="13" height="12" fill="#fff" stroke="#ddd" stroke-width="0.6"/><circle cx="521.3" cy="51" r="2.3" fill="#fff" stroke="#3a3a3a" stroke-width="1.2"/><path d="M522.9,52.6 L527,56.5" stroke="#000" stroke-width="1.6"/><path d="M525.5,44.2 V47.8 M523.7,46 H527.3" stroke="#333" stroke-width="0.9"/><path d="M541,47.5 V55.8 M536.8,51.6 H545.2" stroke="#1ee070" stroke-width="2.2"/><polygon points="541,45.6 538.6,48.4 543.4,48.4" fill="#1ee070"/><polygon points="541,57.6 538.6,54.8 543.4,54.8" fill="#1ee070"/><polygon points="535,51.6 537.8,49.2 537.8,54" fill="#1ee070"/><polygon points="547,51.6 544.2,49.2 544.2,54" fill="#1ee070"/><circle cx="545" cy="47.5" r="2.3" fill="#fff" stroke="#3a3a3a" stroke-width="1.2"/><path d="M546.6,49.1 L549.5,52.2" stroke="#000" stroke-width="1.6"/><circle cx="12" cy="10.6" r="5.1" fill="none" stroke="#5ed400" stroke-width="1.5"/><path d="M6.8,10.6 H17.6" stroke="#111" stroke-width="1.8"/><circle cx="7.8" cy="10.6" r="1.4" fill="#000"/><rect x="6.3" y="4.8999999999999995" width="1.4" height="1.4" fill="#5ed400"/><rect x="16.6" y="4.8999999999999995" width="1.4" height="1.4" fill="#5ed400"/><rect x="6.3" y="15.100000000000001" width="1.4" height="1.4" fill="#5ed400"/><rect x="16.6" y="15.100000000000001" width="1.4" height="1.4" fill="#5ed400"/><rect x="513" y="10.5" width="7.5" height="1" fill="#000"/><rect x="546" y="8" width="7" height="7" fill="none" stroke="#000" stroke-width="1"/><path d="M579.2,7.7 L586.3,14.8 M586.3,7.7 L579.2,14.8" stroke="#000" stroke-width="1"/><path d="M2.5,25.5 H7 L8.5,27 V35.5 H2.5 Z" fill="#fff" stroke="#999" stroke-width="0.8"/><circle cx="6" cy="30.5" r="1.6" fill="none" stroke="#000" stroke-width="1"/><path d="M7.1,31.6 L9.6,34.2" stroke="#000" stroke-width="1.3"/><rect x="560.5" y="23.5" width="11" height="12" fill="#fff" stroke="#e4e4e4" stroke-width="1"/><rect x="573.5" y="23.5" width="11" height="12" fill="#fff" stroke="#e4e4e4" stroke-width="1"/><rect x="586.5" y="23.5" width="11" height="12" fill="#fff" stroke="#e4e4e4" stroke-width="1"/><rect x="563.7" y="30.9" width="4.5" height="1.4" fill="#2b3b55"/><rect x="578.2" y="27.6" width="4.4" height="2.8" rx="0.6" fill="none" stroke="#2b3b55" stroke-width="1"/><rect x="576.7" y="29" width="4.6" height="3.1" rx="0.6" fill="#fff" stroke="#2b3b55" stroke-width="1"/><path d="M590.8,27.8 L595.8,32.2 M595.8,27.8 L590.8,32.2" stroke="#2b3b55" stroke-width="1.3"/><rect x="574" y="87.2" width="4.2" height="3.3" rx="0.7" fill="none" stroke="#222" stroke-width="1"/><rect x="572.5" y="89.1" width="4" height="3.6" rx="0.7" fill="#d9d9d9" stroke="#222" stroke-width="1"/><path d="M588,88.0 L593.5,92.8 M593.5,88.0 L588,92.8" stroke="#222" stroke-width="1.2"/><rect x="574" y="226.5" width="4.2" height="3.3" rx="0.7" fill="none" stroke="#222" stroke-width="1"/><rect x="572.5" y="228.4" width="4" height="3.6" rx="0.7" fill="#d9d9d9" stroke="#222" stroke-width="1"/><path d="M588,227.29999999999998 L593.5,232.1 M593.5,227.29999999999998 L588,232.1" stroke="#222" stroke-width="1.2"/><rect x="574" y="388.7" width="4.2" height="3.3" rx="0.7" fill="none" stroke="#222" stroke-width="1"/><rect x="572.5" y="390.6" width="4" height="3.6" rx="0.7" fill="#d9d9d9" stroke="#222" stroke-width="1"/><path d="M588,389.5 L593.5,394.3 M593.5,389.5 L588,394.3" stroke="#222" stroke-width="1.2"/><path d="M419.5,119.3 H422.5 M421,118 V120.6 M419.5,123 H422.5" stroke="#666" stroke-width="0.7"/><path d="M557.2,119.8 L559.7,122.3 L562.2,119.8" fill="none" stroke="#333" stroke-width="0.9"/><defs><linearGradient id="rb" x1="0" x2="1" y1="0" y2="0"><stop offset="0" stop-color="#ff00ff"/><stop offset="0.2" stop-color="#0000ff"/><stop offset="0.45" stop-color="#00ffff"/><stop offset="0.6" stop-color="#00ff00"/><stop offset="0.8" stop-color="#ffff00"/><stop offset="1" stop-color="#ff0000"/></linearGradient><linearGradient id="rbv" x1="0" x2="0" y1="0" y2="1"><stop offset="0" stop-color="#fff" stop-opacity="0.5"/><stop offset="1" stop-color="#000" stop-opacity="0.2"/></linearGradient></defs><rect x="573.3" y="117.8" width="8.7" height="6.2" fill="url(#rb)" stroke="#555" stroke-width="0.5"/><path d="M409.9,267.9 Q414.9,262.2 419.9,267.9 Q414.9,273.59999999999997 409.9,267.9 Z" fill="#18c050" stroke="#111" stroke-width="1.1"/><circle cx="414.9" cy="267.9" r="1.3" fill="#111"/><path d="M437.8,267.9 Q442.8,262.2 447.8,267.9 Q442.8,273.59999999999997 437.8,267.9 Z" fill="#b8b8b8" stroke="#8a8a8a" stroke-width="1.1"/><circle cx="442.8" cy="267.9" r="1.3" fill="#8a8a8a"/><path d="M469.1,267.2 V265.2 A1.9000000000000001,1.9000000000000001 0 0 1 472.9,265.2 V267.2" fill="none" stroke="#c4c4c4" stroke-width="1.2"/><rect x="467.8" y="267.2" width="6.4" height="5.2" rx="0.5" fill="#c4c4c4"/><path d="M497.2,267.5 V265.5 A2.5,2.5 0 0 1 502.2,265.5 V267.5" fill="none" stroke="#000" stroke-width="1.2"/><rect x="495.9" y="267.5" width="7.6" height="5.4" rx="0.5" fill="#000"/><path d="M525.9,264.3 H528.9 V267.2 H531.8 V270.2 H528.9 V273.1 H525.9 V270.2 H523 V267.2 H525.9 Z" fill="#2ee87a" stroke="#0b7a3a" stroke-width="0.8" stroke-linejoin="round"/><rect x="551.3" y="266.8" width="9" height="3.8" rx="0.5" fill="#2ee87a" stroke="#0b7a3a" stroke-width="0.8"/><path d="M580.5,271.3 L585.5,265.8" stroke="#0b7a3a" stroke-width="3.6"/><path d="M580.8,271 L585.2,266.1" stroke="#2ee87a" stroke-width="2.2"/><path d="M583,268.6 L587,272.5" stroke="#444" stroke-width="1.2"/><path d="M404.9,292 Q409.5,287.06 414.1,292 Q409.5,296.94 404.9,292 Z" fill="#18c050" stroke="#111" stroke-width="1.1"/><circle cx="409.5" cy="292" r="1.3" fill="#111"/><path d="M428.3,291.5 V289.5 A1.4999999999999998,1.4999999999999998 0 0 1 431.3,289.5 V291.5" fill="none" stroke="#c8c8c8" stroke-width="1.2"/><rect x="427" y="291.5" width="5.6" height="4.8" rx="0.5" fill="#c8c8c8"/><rect x="447.8" y="285.8" width="4.4" height="3.5" fill="#2ee87a" stroke="#0b6a35" stroke-width="0.6"/><rect x="445.6" y="289" width="8.8" height="5" fill="#000"/><rect x="447.4" y="290" width="5.2" height="1.7" fill="#fff"/><rect x="447.2" y="293" width="5.6" height="2" fill="#2ee87a"/><path d="M468.4,286.8 L467.8,297 M472.2,286.8 L471.6,297 M465.6,290 H474.6 M465.4,293.6 H474.4" stroke="#555" stroke-width="0.9"/><path d="M588.6,408 L591.4,405.3 L594.2,408" fill="none" stroke="#333" stroke-width="0.8"/><path d="M587,409 H596" stroke="#333" stroke-width="0.8"/><path d="M588.6,412.3 L591.4,415 L594.2,412.3" fill="none" stroke="#333" stroke-width="0.8"/><path d="M587.5,433.5 H592.5 M587.5,435.5 H592.5 M587.5,437.5 H592.5" stroke="#aaa" stroke-width="0.7"/><path d="M387,92 L389.8,89.2 L392.6,92" fill="none" stroke="#222" stroke-width="1.1"/><path d="M387,424.8 L389.8,427.6 L392.6,424.8" fill="none" stroke="#222" stroke-width="1.1"/><path d="M34.3,436.3 L31.6,439 L34.3,441.7" fill="none" stroke="#222" stroke-width="1.1"/><path d="M375.8,435.5 L378.6,438.3 L375.8,441.1" fill="none" stroke="#222" stroke-width="1.1"/><path d="M57.699999999999996,72 L60.3,74.6 L62.9,72" fill="none" stroke="#333" stroke-width="0.9"/><path d="M142.70000000000002,72 L145.3,74.6 L147.9,72" fill="none" stroke="#333" stroke-width="0.9"/><path d="M231.8,72 L234.4,74.6 L237.0,72" fill="none" stroke="#333" stroke-width="0.9"/><path d="M70.8,72.5 H83.3 M155.5,72.5 H166.9" stroke="#fff" stroke-width="2"/><path d="M70.8,72.5 H83.3 M155.5,72.5 H166.9" stroke="#777" stroke-width="0.8"/><rect x="4" y="42.4" width="1" height="1" fill="#7a7a7a"/><rect x="4.6" y="43.0" width="1" height="1" fill="#fff" opacity="0.7"/><rect x="4" y="45.3" width="1" height="1" fill="#7a7a7a"/><rect x="4.6" y="45.9" width="1" height="1" fill="#fff" opacity="0.7"/><rect x="4" y="48.2" width="1" height="1" fill="#7a7a7a"/><rect x="4.6" y="48.8" width="1" height="1" fill="#fff" opacity="0.7"/><rect x="4" y="51.1" width="1" height="1" fill="#7a7a7a"/><rect x="4.6" y="51.7" width="1" height="1" fill="#fff" opacity="0.7"/><rect x="4" y="54.0" width="1" height="1" fill="#7a7a7a"/><rect x="4.6" y="54.6" width="1" height="1" fill="#fff" opacity="0.7"/><rect x="4" y="56.9" width="1" height="1" fill="#7a7a7a"/><rect x="4.6" y="57.5" width="1" height="1" fill="#fff" opacity="0.7"/><rect x="4" y="59.8" width="1" height="1" fill="#7a7a7a"/><rect x="4.6" y="60.4" width="1" height="1" fill="#fff" opacity="0.7"/><rect x="192.2" y="42.4" width="1" height="1" fill="#7a7a7a"/><rect x="192.79999999999998" y="43.0" width="1" height="1" fill="#fff" opacity="0.7"/><rect x="192.2" y="45.3" width="1" height="1" fill="#7a7a7a"/><rect x="192.79999999999998" y="45.9" width="1" height="1" fill="#fff" opacity="0.7"/><rect x="192.2" y="48.2" width="1" height="1" fill="#7a7a7a"/><rect x="192.79999999999998" y="48.8" width="1" height="1" fill="#fff" opacity="0.7"/><rect x="192.2" y="51.1" width="1" height="1" fill="#7a7a7a"/><rect x="192.79999999999998" y="51.7" width="1" height="1" fill="#fff" opacity="0.7"/><rect x="192.2" y="54.0" width="1" height="1" fill="#7a7a7a"/><rect x="192.79999999999998" y="54.6" width="1" height="1" fill="#fff" opacity="0.7"/><rect x="192.2" y="56.9" width="1" height="1" fill="#7a7a7a"/><rect x="192.79999999999998" y="57.5" width="1" height="1" fill="#fff" opacity="0.7"/><rect x="192.2" y="59.8" width="1" height="1" fill="#7a7a7a"/><rect x="192.79999999999998" y="60.4" width="1" height="1" fill="#fff" opacity="0.7"/><rect x="344.3" y="42.4" width="1" height="1" fill="#7a7a7a"/><rect x="344.90000000000003" y="43.0" width="1" height="1" fill="#fff" opacity="0.7"/><rect x="344.3" y="45.3" width="1" height="1" fill="#7a7a7a"/><rect x="344.90000000000003" y="45.9" width="1" height="1" fill="#fff" opacity="0.7"/><rect x="344.3" y="48.2" width="1" height="1" fill="#7a7a7a"/><rect x="344.90000000000003" y="48.8" width="1" height="1" fill="#fff" opacity="0.7"/><rect x="344.3" y="51.1" width="1" height="1" fill="#7a7a7a"/><rect x="344.90000000000003" y="51.7" width="1" height="1" fill="#fff" opacity="0.7"/><rect x="344.3" y="54.0" width="1" height="1" fill="#7a7a7a"/><rect x="344.90000000000003" y="54.6" width="1" height="1" fill="#fff" opacity="0.7"/><rect x="344.3" y="56.9" width="1" height="1" fill="#7a7a7a"/><rect x="344.90000000000003" y="57.5" width="1" height="1" fill="#fff" opacity="0.7"/><rect x="344.3" y="59.8" width="1" height="1" fill="#7a7a7a"/><rect x="344.90000000000003" y="60.4" width="1" height="1" fill="#fff" opacity="0.7"/><rect x="4.3" y="67.0" width="1" height="1" fill="#7a7a7a"/><rect x="4.8999999999999995" y="67.6" width="1" height="1" fill="#fff" opacity="0.7"/><rect x="4.3" y="69.9" width="1" height="1" fill="#7a7a7a"/><rect x="4.8999999999999995" y="70.5" width="1" height="1" fill="#fff" opacity="0.7"/><rect x="4.3" y="72.8" width="1" height="1" fill="#7a7a7a"/><rect x="4.8999999999999995" y="73.4" width="1" height="1" fill="#fff" opacity="0.7"/><rect x="4.3" y="75.7" width="1" height="1" fill="#7a7a7a"/><rect x="4.8999999999999995" y="76.3" width="1" height="1" fill="#fff" opacity="0.7"/><rect x="4.3" y="78.6" width="1" height="1" fill="#7a7a7a"/><rect x="4.8999999999999995" y="79.2" width="1" height="1" fill="#fff" opacity="0.7"/><rect x="246.3" y="67.0" width="1" height="1" fill="#7a7a7a"/><rect x="246.9" y="67.6" width="1" height="1" fill="#fff" opacity="0.7"/><rect x="246.3" y="69.9" width="1" height="1" fill="#7a7a7a"/><rect x="246.9" y="70.5" width="1" height="1" fill="#fff" opacity="0.7"/><rect x="246.3" y="72.8" width="1" height="1" fill="#7a7a7a"/><rect x="246.9" y="73.4" width="1" height="1" fill="#fff" opacity="0.7"/><rect x="246.3" y="75.7" width="1" height="1" fill="#7a7a7a"/><rect x="246.9" y="76.3" width="1" height="1" fill="#fff" opacity="0.7"/><rect x="246.3" y="78.6" width="1" height="1" fill="#7a7a7a"/><rect x="246.9" y="79.2" width="1" height="1" fill="#fff" opacity="0.7"/><rect x="3.6" y="86" width="1.2" height="1" fill="#7a7a7a"/><rect x="6.5" y="86" width="1.2" height="1" fill="#7a7a7a"/><rect x="9.4" y="86" width="1.2" height="1" fill="#7a7a7a"/><rect x="12.3" y="86" width="1.2" height="1" fill="#7a7a7a"/><rect x="15.2" y="86" width="1.2" height="1" fill="#7a7a7a"/><rect x="18.1" y="86" width="1.2" height="1" fill="#7a7a7a"/><rect x="21.0" y="86" width="1.2" height="1" fill="#7a7a7a"/><rect x="3.6" y="290" width="1.2" height="1" fill="#7a7a7a"/><rect x="6.5" y="290" width="1.2" height="1" fill="#7a7a7a"/><rect x="9.4" y="290" width="1.2" height="1" fill="#7a7a7a"/><rect x="12.3" y="290" width="1.2" height="1" fill="#7a7a7a"/><rect x="15.2" y="290" width="1.2" height="1" fill="#7a7a7a"/><rect x="18.1" y="290" width="1.2" height="1" fill="#7a7a7a"/><rect x="21.0" y="290" width="1.2" height="1" fill="#7a7a7a"/><rect x="4" y="449.0" width="1" height="1" fill="#7a7a7a"/><rect x="4.6" y="449.6" width="1" height="1" fill="#fff" opacity="0.7"/><rect x="4" y="451.9" width="1" height="1" fill="#7a7a7a"/><rect x="4.6" y="452.5" width="1" height="1" fill="#fff" opacity="0.7"/><rect x="4" y="454.8" width="1" height="1" fill="#7a7a7a"/><rect x="4.6" y="455.4" width="1" height="1" fill="#fff" opacity="0.7"/><rect x="4" y="457.7" width="1" height="1" fill="#7a7a7a"/><rect x="4.6" y="458.3" width="1" height="1" fill="#fff" opacity="0.7"/><rect x="4" y="460.6" width="1" height="1" fill="#7a7a7a"/><rect x="4.6" y="461.2" width="1" height="1" fill="#fff" opacity="0.7"/><rect x="4" y="463.5" width="1" height="1" fill="#7a7a7a"/><rect x="4.6" y="464.1" width="1" height="1" fill="#fff" opacity="0.7"/><rect x="336" y="449.0" width="1" height="1" fill="#7a7a7a"/><rect x="336.6" y="449.6" width="1" height="1" fill="#fff" opacity="0.7"/><rect x="336" y="451.9" width="1" height="1" fill="#7a7a7a"/><rect x="336.6" y="452.5" width="1" height="1" fill="#fff" opacity="0.7"/><rect x="336" y="454.8" width="1" height="1" fill="#7a7a7a"/><rect x="336.6" y="455.4" width="1" height="1" fill="#fff" opacity="0.7"/><rect x="336" y="457.7" width="1" height="1" fill="#7a7a7a"/><rect x="336.6" y="458.3" width="1" height="1" fill="#fff" opacity="0.7"/><rect x="336" y="460.6" width="1" height="1" fill="#7a7a7a"/><rect x="336.6" y="461.2" width="1" height="1" fill="#fff" opacity="0.7"/><rect x="336" y="463.5" width="1" height="1" fill="#7a7a7a"/><rect x="336.6" y="464.1" width="1" height="1" fill="#fff" opacity="0.7"/><rect x="457" y="449.0" width="1" height="1" fill="#7a7a7a"/><rect x="457.6" y="449.6" width="1" height="1" fill="#fff" opacity="0.7"/><rect x="457" y="451.9" width="1" height="1" fill="#7a7a7a"/><rect x="457.6" y="452.5" width="1" height="1" fill="#fff" opacity="0.7"/><rect x="457" y="454.8" width="1" height="1" fill="#7a7a7a"/><rect x="457.6" y="455.4" width="1" height="1" fill="#fff" opacity="0.7"/><rect x="457" y="457.7" width="1" height="1" fill="#7a7a7a"/><rect x="457.6" y="458.3" width="1" height="1" fill="#fff" opacity="0.7"/><rect x="457" y="460.6" width="1" height="1" fill="#7a7a7a"/><rect x="457.6" y="461.2" width="1" height="1" fill="#fff" opacity="0.7"/><rect x="457" y="463.5" width="1" height="1" fill="#7a7a7a"/><rect x="457.6" y="464.1" width="1" height="1" fill="#fff" opacity="0.7"/><rect x="219.8" y="42.7" width="1" height="17" fill="#d4d4d4"/><rect x="269.0" y="42.7" width="1" height="17" fill="#d4d4d4"/><rect x="340.2" y="42.7" width="1" height="17" fill="#d4d4d4"/><rect x="394.2" y="42.7" width="1" height="17" fill="#d4d4d4"/><rect x="188" y="38.5" width="1" height="24" fill="#c8c8c8"/><rect x="211.0" y="449" width="1" height="17" fill="#d4d4d4"/><rect x="282.8" y="449" width="1" height="17" fill="#d4d4d4"/><rect x="452.0" y="449" width="1" height="17" fill="#d4d4d4"/><rect x="331" y="445" width="1" height="26" fill="#c8c8c8"/><rect x="3" y="285.3" width="21" height="1" fill="#d8d8d8"/><path d="M7,94.2 L19,106.4" stroke="#333" stroke-width="1.1"/><polygon points="18.1,106.4 21.9,106.4 20,108.5" fill="#000"/><circle cx="12.6" cy="121.5" r="6.2" fill="none" stroke="#555" stroke-width="1.3"/><polygon points="18.1,128.20000000000002 21.9,128.20000000000002 20,130.3" fill="#000"/><path d="M6.8,139.5 C9.5,137 11.5,139.5 10.5,143 C9.5,146.5 9.5,150 11.5,150 C13.5,150 13.5,146 13.5,143 C13.5,139.5 14.5,137.5 16.5,138 C19,138.5 19.5,142 19.5,146.5" fill="none" stroke="#555" stroke-width="1.3"/><polygon points="18.1,148.70000000000002 21.9,148.70000000000002 20,150.8" fill="#000"/><ellipse cx="12.6" cy="165.2" rx="6.6" ry="3.9" transform="rotate(-42 12.6 165.2)" fill="none" stroke="#555" stroke-width="1.3"/><polygon points="18.1,171.20000000000002 21.9,171.20000000000002 20,173.3" fill="#000"/><path d="M8.5,184.5 L7.5,187 Q7.5,189.6 10,189.8 H18.6" fill="none" stroke="#555" stroke-width="1.3"/><polygon points="18.1,192.5 21.9,192.5 20,194.6" fill="#000"/><rect x="8" y="203.8" width="10.6" height="5.6" rx="1" fill="#fff" stroke="#555" stroke-width="1"/><path d="M8.5,210 L12,214.5" stroke="#555" stroke-width="2.4"/><path d="M8.8,210.4 L11.8,214.2" stroke="#fff" stroke-width="1"/><circle cx="7.8" cy="209.5" r="1.4" fill="#1ec85a" stroke="#0a6a2e" stroke-width="0.8"/><polygon points="18.1,214.4 21.9,214.4 20,216.5" fill="#000"/><text x="12.6" y="232" text-anchor="middle" font-family="Liberation Sans" font-size="7.5" fill="#222">A</text><path d="M7.2,229 V236 M18,229 V236 M7.5,232.4 H17.8" stroke="#333" stroke-width="0.9"/><polygon points="7.30,232.40 10.00,230.90 10.00,233.90" fill="#14b04a" stroke="#0b5a2a" stroke-width="0.7"/><polygon points="17.90,232.40 15.20,230.90 15.20,233.90" fill="#14b04a" stroke="#0b5a2a" stroke-width="0.7"/><polygon points="18.1,235.9 21.9,235.9 20,238" fill="#000"/><path d="M17.5,248 A6.2,6.2 0 1 0 18.6,252.5" fill="none" stroke="#555" stroke-width="1.2"/><polygon points="15.6,245.2 18.8,245.5 17.6,248.6" fill="#333"/><path d="M12.6,248.5 V255 M9.3,251.7 H15.9" stroke="#1ec85a" stroke-width="1.6"/><polygon points="18.1,257.5 21.9,257.5 20,259.6" fill="#000"/><path d="M7.2,268 V273 M18,268 V273 M7.5,270.5 H17.8" stroke="#333" stroke-width="0.9"/><polygon points="7.30,270.50 9.64,269.20 9.64,271.80" fill="#14b04a" stroke="#0b5a2a" stroke-width="0.7"/><polygon points="17.90,270.50 15.56,269.20 15.56,271.80" fill="#14b04a" stroke="#0b5a2a" stroke-width="0.7"/><rect x="7.2" y="275.3" width="11.4" height="4" fill="#22e070" stroke="#0b6a35" stroke-width="0.7"/><path d="M9,277.3 H17" stroke="#0b6a35" stroke-width="0.6" stroke-dasharray="0.6,0.8"/><polygon points="18.1,279.4 21.9,279.4 20,281.5" fill="#000"/><text x="6" y="309.2" font-family="Liberation Sans" font-size="14" fill="#111" textLength="9" lengthAdjust="spacingAndGlyphs">A</text><path d="M17.6,297.8 V309.6 M16.2,297.8 H19 M16.2,309.6 H19" stroke="#222" stroke-width="0.9"/><defs><clipPath id="hc"><rect x="6.6" y="319.2" width="13" height="13"/></clipPath></defs><rect x="6.6" y="319.2" width="13" height="13" fill="#fff" stroke="#888" stroke-width="0.8"/><g clip-path="url(#hc)" stroke="#888" stroke-width="1.1"><path d="M-8,319 L6,333"/><path d="M-5,319 L9,333"/><path d="M-2,319 L12,333"/><path d="M1,319 L15,333"/><path d="M4,319 L18,333"/><path d="M7,319 L21,333"/><path d="M10,319 L24,333"/><path d="M13,319 L27,333"/><path d="M16,319 L30,333"/><path d="M19,319 L33,333"/></g><path d="M7.3,343.5 H10.6 L11.6,341.6 H14.6 L15.6,343.5 H18.6 V350.7 H7.3 Z" fill="#fff" stroke="#777" stroke-width="0.9"/><circle cx="13" cy="346.9" r="2.4" fill="#1ee070" stroke="#0b6a35" stroke-width="0.5"/><rect x="7.3" y="364" width="11.3" height="6.6" rx="1.2" fill="#fff" stroke="#444" stroke-width="1"/><circle cx="8.7" cy="372.2" r="2.5" fill="#fff" stroke="#444" stroke-width="0.9"/><circle cx="18" cy="371" r="1.7" fill="#1ec85a" stroke="#0a6a2e" stroke-width="0.8"/><circle cx="13" cy="391.4" r="1.7" fill="#1ec85a" stroke="#0a6a2e" stroke-width="0.8"/><path d="M34.7,457.4 H46.9 M40.7,451.3 V463.5" stroke="#777" stroke-width="1.2" stroke-dasharray="1.2,0.8"/><circle cx="40.7" cy="457.4" r="1" fill="#555"/><circle cx="59" cy="451.8" r="1.35" fill="#1ec85a" stroke="#0a6a2e" stroke-width="0.8"/><circle cx="63.6" cy="451.8" r="1.35" fill="#1ec85a" stroke="#0a6a2e" stroke-width="0.8"/><circle cx="68.3" cy="451.8" r="1.35" fill="#1ec85a" stroke="#0a6a2e" stroke-width="0.8"/><circle cx="59" cy="455.7" r="1.35" fill="#1ec85a" stroke="#0a6a2e" stroke-width="0.8"/><circle cx="63.6" cy="455.7" r="1.35" fill="#1ec85a" stroke="#0a6a2e" stroke-width="0.8"/><circle cx="68.3" cy="455.7" r="1.35" fill="#1ec85a" stroke="#0a6a2e" stroke-width="0.8"/><circle cx="59" cy="459.6" r="1.35" fill="#1ec85a" stroke="#0a6a2e" stroke-width="0.8"/><circle cx="63.6" cy="459.6" r="1.35" fill="#1ec85a" stroke="#0a6a2e" stroke-width="0.8"/><circle cx="68.3" cy="459.6" r="1.35" fill="#1ec85a" stroke="#0a6a2e" stroke-width="0.8"/><circle cx="59" cy="463.5" r="1.35" fill="#1ec85a" stroke="#0a6a2e" stroke-width="0.8"/><circle cx="63.6" cy="463.5" r="1.35" fill="#1ec85a" stroke="#0a6a2e" stroke-width="0.8"/><circle cx="68.3" cy="463.5" r="1.35" fill="#1ec85a" stroke="#0a6a2e" stroke-width="0.8"/><path d="M83.4,451.6 L92.1,460.6 M80.4,454.8 Q86,456 88.9,463.3" fill="none" stroke="#666" stroke-width="0.9"/><circle cx="83.4" cy="451.6" r="1.5" fill="#1ec85a" stroke="#0a6a2e" stroke-width="0.8"/><circle cx="80.4" cy="454.8" r="1.5" fill="#1ec85a" stroke="#0a6a2e" stroke-width="0.8"/><circle cx="92.1" cy="460.6" r="1.5" fill="#1ec85a" stroke="#0a6a2e" stroke-width="0.8"/><circle cx="88.9" cy="463.3" r="1.5" fill="#1ec85a" stroke="#0a6a2e" stroke-width="0.8"/><path d="M102.4,455.4 Q108,456 110.6,463.6 M105.6,451.3 L114.7,460.5" fill="none" stroke="#666" stroke-width="0.9"/><circle cx="105.6" cy="451.3" r="1.4" fill="#1ec85a" stroke="#0a6a2e" stroke-width="0.8"/><circle cx="102.4" cy="455.4" r="1.4" fill="#1ec85a" stroke="#0a6a2e" stroke-width="0.8"/><circle cx="108.7" cy="454.4" r="1.4" fill="#1ec85a" stroke="#0a6a2e" stroke-width="0.8"/><circle cx="108.3" cy="458" r="1.4" fill="#1ec85a" stroke="#0a6a2e" stroke-width="0.8"/><circle cx="111.8" cy="457.4" r="1.4" fill="#1ec85a" stroke="#0a6a2e" stroke-width="0.8"/><circle cx="114.7" cy="460.5" r="1.4" fill="#1ec85a" stroke="#0a6a2e" stroke-width="0.8"/><circle cx="110.6" cy="463.6" r="1.4" fill="#1ec85a" stroke="#0a6a2e" stroke-width="0.8"/><path d="M124.8,454.8 Q131,456.5 133,463.5 M128,450.5 L138.5,460.8" fill="none" stroke="#666" stroke-width="1"/><circle cx="133.2" cy="455.3" r="1.5" fill="#1ec85a" stroke="#0a6a2e" stroke-width="0.8"/><circle cx="125.5" cy="463.3" r="1.5" fill="#1ec85a" stroke="#0a6a2e" stroke-width="0.8"/><path d="M147,455 Q154,456.5 156,464 M151,450.5 L161,461" fill="none" stroke="#666" stroke-width="1"/><circle cx="155.5" cy="455.3" r="1.5" fill="#1ec85a" stroke="#0a6a2e" stroke-width="0.8"/><circle cx="152.6" cy="458" r="1.5" fill="#1ec85a" stroke="#0a6a2e" stroke-width="0.8"/><path d="M169,455 Q176,456.5 178,464 M172.5,450.5 L183,461" fill="none" stroke="#666" stroke-width="1"/><circle cx="175.9" cy="454.4" r="1.5" fill="#1ec85a" stroke="#0a6a2e" stroke-width="0.8"/><circle cx="177.1" cy="460.9" r="1.5" fill="#1ec85a" stroke="#0a6a2e" stroke-width="0.8"/><polygon points="179.40,454.40 182.28,452.80 182.28,456.00" fill="#14b04a" stroke="#0b5a2a" stroke-width="0.7"/><polygon points="173.20,460.50 170.32,458.90 170.32,462.10" fill="#14b04a" stroke="#0b5a2a" stroke-width="0.7"/><path d="M193,452 L204,462.7 M204,452 L193,462.7" stroke="#555" stroke-width="1"/><circle cx="198.4" cy="457.5" r="1.5" fill="#1ec85a" stroke="#0a6a2e" stroke-width="0.8"/><rect x="218.5" y="456" width="13.1" height="3.6" fill="#b8f0cf"/><path d="M218.5,457.8 H231.6" stroke="#777" stroke-width="0.9"/><circle cx="225" cy="457.8" r="1.6" fill="#1ec85a" stroke="#0a6a2e" stroke-width="0.8"/><rect x="245.5" y="451" width="3.6" height="13.3" fill="#b8f0cf"/><path d="M247.3,451 V464.3" stroke="#777" stroke-width="0.9"/><circle cx="247.3" cy="457.6" r="1.6" fill="#1ec85a" stroke="#0a6a2e" stroke-width="0.8"/><rect x="263" y="455.8" width="13" height="3.6" fill="#b8f0cf"/><rect x="267.5" y="451" width="3.6" height="13.3" fill="#b8f0cf"/><path d="M263,457.6 H276 M269.3,451 V464.3" stroke="#777" stroke-width="0.9"/><circle cx="269.3" cy="457.6" r="1.6" fill="#1ec85a" stroke="#0a6a2e" stroke-width="0.8"/><rect x="290.2" y="457.2" width="7.2" height="4" transform="rotate(-42 293.8 459.2)" fill="#fff" stroke="#555" stroke-width="0.9"/><path d="M298.9,452.5 V461 M294.8,456.7 H303" stroke="#333" stroke-width="0.6"/><circle cx="298.9" cy="456.7" r="1.7" fill="#1ec85a" stroke="#0a6a2e" stroke-width="0.8"/><path d="M313.3,452.8 V451.5 A2.1,2.1 0 0 1 317.2,451.5 V452.8" fill="none" stroke="#000" stroke-width="1.1"/><rect x="312.1" y="452.8" width="6" height="4.8" fill="#000"/><rect x="314.0" y="459.5" width="7.2" height="4" transform="rotate(-42 317.6 461.5)" fill="#fff" stroke="#555" stroke-width="0.9"/><path d="M322.8,454.6 V463 M318.8,458.7 H327" stroke="#333" stroke-width="0.6"/><circle cx="322.8" cy="458.7" r="1.7" fill="#1ec85a" stroke="#0a6a2e" stroke-width="0.8"/><rect x="344.5" y="452.5" width="12" height="8.4" rx="0.8" fill="#f4f4f4" stroke="#666" stroke-width="1"/><rect x="345" y="453" width="2.6" height="7.4" fill="#00f07a"/><rect x="348.5" y="461.8" width="4" height="1.4" fill="#222"/><rect x="349.5" y="461" width="2" height="2" fill="#000"/><rect x="367.5" y="452.5" width="12" height="8.4" rx="0.8" fill="#f4f4f4" stroke="#666" stroke-width="1"/><rect x="376.4" y="453" width="2.6" height="7.4" fill="#00f07a"/><rect x="368" y="453" width="8.4" height="7.4" fill="#c8dcea"/><rect x="371.5" y="461.8" width="4" height="1.4" fill="#222"/><rect x="372.5" y="461" width="2" height="2" fill="#000"/><rect x="389.2" y="452.5" width="12" height="8.4" rx="0.8" fill="#f4f4f4" stroke="#666" stroke-width="1"/><rect x="389.7" y="453" width="11" height="2.4" fill="#00f07a"/><rect x="393.2" y="461.8" width="4" height="1.4" fill="#222"/><rect x="394.2" y="461" width="2" height="2" fill="#000"/><rect x="411.8" y="452.5" width="12" height="8.4" rx="0.8" fill="#f4f4f4" stroke="#666" stroke-width="1"/><rect x="412.3" y="458.3" width="11" height="2.4" fill="#00f07a"/><rect x="415.8" y="461.8" width="4" height="1.4" fill="#222"/><rect x="416.8" y="461" width="2" height="2" fill="#000"/><rect x="433.8" y="452.5" width="12" height="8.4" rx="0.8" fill="#f4f4f4" stroke="#666" stroke-width="1"/><rect x="437.3" y="454.8" width="5" height="3.6" fill="#00f07a"/><rect x="437.8" y="461.8" width="4" height="1.4" fill="#222"/><rect x="438.8" y="461" width="2" height="2" fill="#000"/><path d="M464,458.2 H470 M467,455.2 V461.2" stroke="#000" stroke-width="2"/><rect x="471.8" y="451.2" width="6.4" height="13" fill="#f8f8f8" stroke="#999" stroke-width="0.8"/><path d="M473.5,454 H476.5 M473.5,456 H476.5 M473.5,458 H476.5 M473.5,460 H476.5 M473.5,462 H476.5" stroke="#bbb" stroke-width="0.6"/><path d="M486.5,458.2 H492.5 M489.5,455.2 V461.2" stroke="#000" stroke-width="2"/><rect x="493.2" y="451.2" width="7.4" height="13" fill="#b8f0cf" stroke="#999" stroke-width="0.8"/><path d="M494.5,456.8 L499.5,452.5" stroke="#666" stroke-width="0.7"/><circle cx="497" cy="461" r="2" fill="none" stroke="#666" stroke-width="0.7"/><path d="M493.2,457.7 H500.6" stroke="#999" stroke-width="0.6"/><path d="M278.2,486.4 C281,489 284,490 286,487.5 C288,484.5 288,479 292,477 C296,475 301,475.5 302.6,479 L303,483" fill="none" stroke="#000" stroke-width="1.3"/><rect x="292.3" y="484" width="21.2" height="29.4" rx="4" fill="#fff" stroke="#000" stroke-width="1.7"/><path d="M292.3,494.7 H313.5 M298.8,484 V494.7 M306.5,484 V494.7" stroke="#000" stroke-width="1.3"/><rect x="299.7" y="484.8" width="6.1" height="9.5" fill="#00f07a"/></svg></body></html>
